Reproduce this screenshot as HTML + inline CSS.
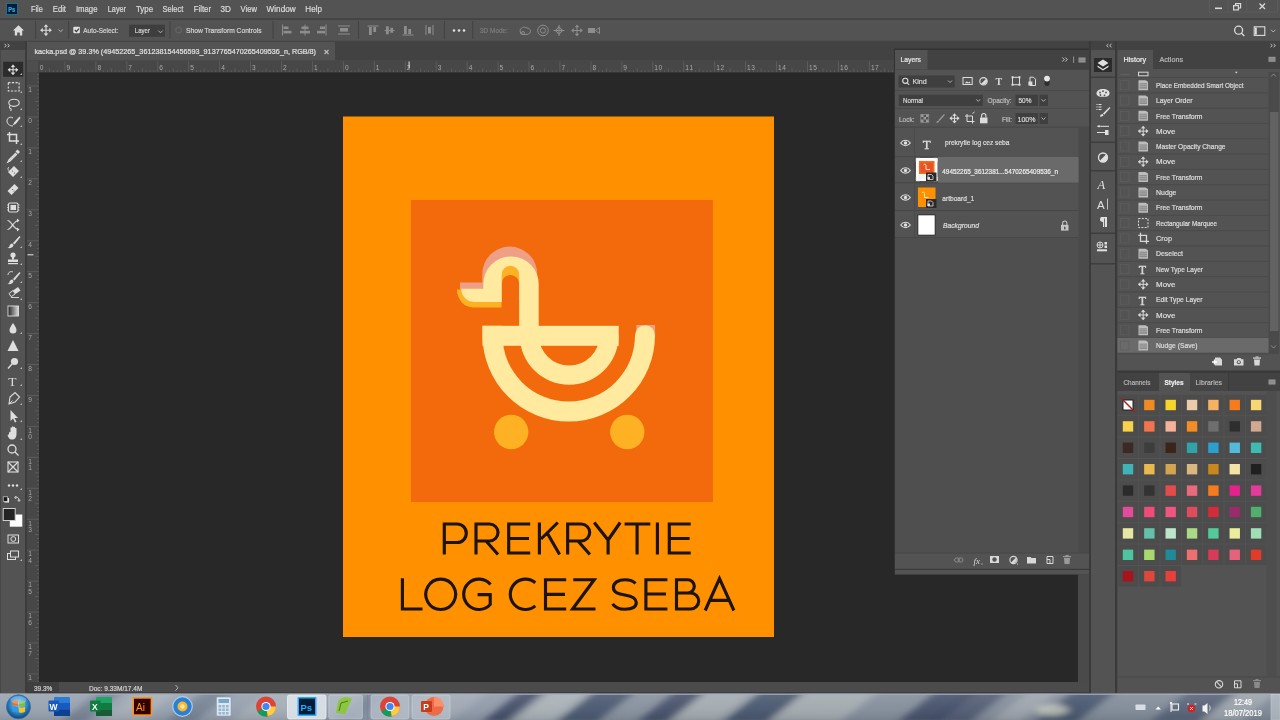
<!DOCTYPE html>
<html><head><meta charset="utf-8"><style>
html,body{margin:0;padding:0;width:1280px;height:720px;overflow:hidden;background:#535353}
svg{display:block;will-change:transform}
</style></head><body>
<svg width="1280" height="720" viewBox="0 0 1280 720" font-family="'Liberation Sans', sans-serif">
<rect x="0" y="0" width="1280" height="720" fill="#535353" />
<rect x="0" y="18.2" width="1280" height="1.8" fill="#444444" />
<rect x="6" y="3" width="12" height="12" fill="#1f6f8c" />
<rect x="7" y="4" width="10" height="10" fill="#001e36" />
<text x="8.2" y="11.8" font-size="7" fill="#3aa6e0" stroke="#3aa6e0" stroke-width="0.22" font-weight="bold" textLength="7" lengthAdjust="spacingAndGlyphs" >Ps</text>
<text x="30.9" y="11.6" font-size="9" fill="#dadada" stroke="#dadada" stroke-width="0.22" textLength="11.9" lengthAdjust="spacingAndGlyphs" >File</text>
<text x="52.8" y="11.6" font-size="9" fill="#dadada" stroke="#dadada" stroke-width="0.22" textLength="13.2" lengthAdjust="spacingAndGlyphs" >Edit</text>
<text x="75.9" y="11.6" font-size="9" fill="#dadada" stroke="#dadada" stroke-width="0.22" textLength="21.6" lengthAdjust="spacingAndGlyphs" >Image</text>
<text x="107.8" y="11.6" font-size="9" fill="#dadada" stroke="#dadada" stroke-width="0.22" textLength="18.2" lengthAdjust="spacingAndGlyphs" >Layer</text>
<text x="136" y="11.6" font-size="9" fill="#dadada" stroke="#dadada" stroke-width="0.22" textLength="17" lengthAdjust="spacingAndGlyphs" >Type</text>
<text x="162.5" y="11.6" font-size="9" fill="#dadada" stroke="#dadada" stroke-width="0.22" textLength="20.9" lengthAdjust="spacingAndGlyphs" >Select</text>
<text x="193.75" y="11.6" font-size="9" fill="#dadada" stroke="#dadada" stroke-width="0.22" textLength="17.25" lengthAdjust="spacingAndGlyphs" >Filter</text>
<text x="220.6" y="11.6" font-size="9" fill="#dadada" stroke="#dadada" stroke-width="0.22" textLength="10.4" lengthAdjust="spacingAndGlyphs" >3D</text>
<text x="240.6" y="11.6" font-size="9" fill="#dadada" stroke="#dadada" stroke-width="0.22" textLength="16.3" lengthAdjust="spacingAndGlyphs" >View</text>
<text x="266.6" y="11.6" font-size="9" fill="#dadada" stroke="#dadada" stroke-width="0.22" textLength="29.0" lengthAdjust="spacingAndGlyphs" >Window</text>
<text x="305.3" y="11.6" font-size="9" fill="#dadada" stroke="#dadada" stroke-width="0.22" textLength="16.7" lengthAdjust="spacingAndGlyphs" >Help</text>
<rect x="1209.5" y="-1" width="68" height="13" fill="none" stroke="#5c5c5c" stroke-width="1"/>
<line x1="1228" y1="0" x2="1228" y2="12" stroke="#5a5a5a"/>
<line x1="1246.5" y1="0" x2="1246.5" y2="12" stroke="#5a5a5a"/>
<rect x="1215" y="7.5" width="7" height="1.6" fill="#d8d8d8" />
<g fill="none" stroke="#d8d8d8" stroke-width="1.2"><rect x="1233.6" y="5.6" width="4.8" height="4.3"/><path d="M1235.6 5.6 V3.6 H1240.6 V8 H1238.4"/></g>
<path d="M1259.5 3.5 L1265 9 M1265 3.5 L1259.5 9" stroke="#d8d8d8" stroke-width="1.3"/>
<rect x="0" y="40.8" width="1280" height="1.2" fill="#444444" />
<rect x="35.1" y="21" width="1" height="18" fill="#424242" />
<rect x="68.1" y="21" width="1" height="18" fill="#424242" />
<rect x="169.5" y="21" width="1" height="18" fill="#424242" />
<rect x="272.5" y="21" width="1" height="18" fill="#424242" />
<rect x="358.0" y="21" width="1" height="18" fill="#424242" />
<rect x="443.9" y="21" width="1" height="18" fill="#424242" />
<rect x="472.2" y="21" width="1" height="18" fill="#424242" />
<path d="M13 30.5 L18.5 25.3 L24 30.5 L22.2 30.5 L22.2 35.6 L19.8 35.6 L19.8 32.4 L17.2 32.4 L17.2 35.6 L14.8 35.6 L14.8 30.5 Z" fill="#dcdcdc"/>
<g fill="#dcdcdc" stroke="#dcdcdc" stroke-width="1.1"><path d="M41.0 30.2 H51.0 M46 25.2 V35.2" fill="none"/><path d="M40.4 30.2 l2.2 -1.9 v3.8z M51.6 30.2 l-2.2 -1.9 v3.8z M46 24.599999999999998 l-1.9 2.2 h3.8z M46 35.800000000000004 l-1.9 -2.2 h3.8z" stroke-width="0.4"/></g>
<path d="M58.5 29.5 l2.2 2.2 l2.2 -2.2" fill="none" stroke="#bdbdbd" stroke-width="0.9"/>
<rect x="73.3" y="26.7" width="6.6" height="6.6" rx="1" fill="#e0e0e0"/>
<path d="M74.8 30 l1.6 1.6 l2.6 -3" fill="none" stroke="#3a3a3a" stroke-width="1.2"/>
<text x="83.3" y="32.9" font-size="8" fill="#d4d4d4" stroke="#d4d4d4" stroke-width="0.22" textLength="35.1" lengthAdjust="spacingAndGlyphs" >Auto-Select:</text>
<rect x="129" y="24.7" width="36" height="12.1" fill="#3e3e3e" />
<text x="134.8" y="33.3" font-size="8" fill="#d4d4d4" stroke="#d4d4d4" stroke-width="0.22" textLength="15.2" lengthAdjust="spacingAndGlyphs" >Layer</text>
<path d="M158.3 30.6 l2.2 2.2 l2.2 -2.2" fill="none" stroke="#bdbdbd" stroke-width="0.9"/>
<circle cx="178.6" cy="30.2" r="2.9" fill="none" stroke="#6a6a6a" stroke-width="1"/>
<text x="186" y="33" font-size="8" fill="#d4d4d4" stroke="#d4d4d4" stroke-width="0.22" textLength="75.5" lengthAdjust="spacingAndGlyphs" >Show Transform Controls</text>
<g fill="#8d8d8d"><rect x="282" y="24.5" width="1" height="11"/><rect x="283.5" y="26.5" width="5" height="2.6"/><rect x="283.5" y="30.8" width="8" height="2.6"/></g>
<g fill="#8d8d8d"><rect x="304.5" y="24.5" width="1" height="11"/><rect x="301.5" y="26.5" width="7" height="2.6"/><rect x="300" y="30.8" width="10" height="2.6"/></g>
<g fill="#8d8d8d"><rect x="325.5" y="24.5" width="1" height="11"/><rect x="320" y="26.5" width="5" height="2.6"/><rect x="317" y="30.8" width="8" height="2.6"/></g>
<g fill="#8d8d8d"><rect x="338" y="25.5" width="12" height="1"/><rect x="340" y="28" width="8" height="3.6"/><rect x="338" y="33.5" width="12" height="1"/></g>
<g fill="#8d8d8d"><rect x="367.5" y="25.5" width="11" height="1"/><rect x="369" y="27" width="2.8" height="8"/><rect x="373.3" y="27" width="2.8" height="5"/></g>
<g fill="#8d8d8d"><rect x="384.5" y="30" width="10" height="1"/><rect x="386" y="26.3" width="2.8" height="8"/><rect x="390.3" y="27.8" width="2.8" height="5"/></g>
<g fill="#8d8d8d"><rect x="402.5" y="34.5" width="11" height="1"/><rect x="404" y="26" width="2.8" height="8"/><rect x="408.3" y="29" width="2.8" height="5"/></g>
<g fill="#8d8d8d"><rect x="425.5" y="25" width="1" height="10"/><rect x="428" y="27" width="3" height="6.5"/><rect x="432.5" y="25" width="1" height="10"/></g>
<circle cx="454" cy="30.5" r="1.3" fill="#e0e0e0"/>
<circle cx="459" cy="30.5" r="1.3" fill="#e0e0e0"/>
<circle cx="464" cy="30.5" r="1.3" fill="#e0e0e0"/>
<text x="480" y="32.6" font-size="7.5" fill="#7c7c7c" stroke="#7c7c7c" stroke-width="0.22" textLength="28" lengthAdjust="spacingAndGlyphs" >3D Mode:</text>
<g fill="none" stroke="#8d8d8d" stroke-width="1"><path d="M520 31 c0 -3 4 -5 7 -3 c3 0 4 3 3 5 c-2 2 -6 2 -9 1 z"/><circle cx="523" cy="33" r="1.5"/></g>
<g fill="none" stroke="#8d8d8d" stroke-width="1"><circle cx="543" cy="30.5" r="5.3"/><circle cx="543" cy="30.5" r="2.6"/></g>
<g fill="none" stroke="#8d8d8d" stroke-width="1"><path d="M559 25 v11 M553.5 30.5 h11"/><rect x="556.5" y="28" width="5" height="5" transform="rotate(45 559 30.5)"/></g>
<g fill="#8d8d8d" stroke="#8d8d8d" stroke-width="1.1"><path d="M572.0 30.5 H582.0 M577 25.5 V35.5" fill="none"/><path d="M571.4 30.5 l2.2 -1.9 v3.8z M582.6 30.5 l-2.2 -1.9 v3.8z M577 24.9 l-1.9 2.2 h3.8z M577 36.1 l-1.9 -2.2 h3.8z" stroke-width="0.4"/></g>
<g fill="#8d8d8d"><rect x="588" y="28" width="7" height="5"/><path d="M595.5 30.5 l4 -3 v6z" fill="none" stroke="#8d8d8d"/></g>
<g fill="none" stroke="#dcdcdc" stroke-width="1.3"><circle cx="1238.6" cy="30.2" r="4"/><path d="M1241.5 33.2 l2.8 2.8"/></g>
<g fill="none" stroke="#dcdcdc" stroke-width="1.1"><rect x="1254.2" y="26.8" width="10.6" height="8.6"/></g>
<rect x="1255" y="27.6" width="1.8" height="7" fill="#dcdcdc" />
<path d="M1271 29.8 l2.2 2.2 l2.2 -2.2" fill="none" stroke="#bdbdbd" stroke-width="0.9"/>
<rect x="0" y="41" width="26" height="9" fill="#424242" />
<path d="M4.5 44 l1.8 1.6 l-1.8 1.6 M7.6 44 l1.8 1.6 l-1.8 1.6" fill="none" stroke="#d0d0d0" stroke-width="0.9"/>
<rect x="0" y="50" width="26" height="643" fill="#535353" />
<rect x="0" y="50" width="1" height="643" fill="#474747" />
<rect x="25" y="41" width="2" height="652" fill="#3c3c3c" />
<rect x="3.1" y="61.75" width="20" height="15" fill="#2c2c2c" />
<g fill="#dedede" stroke="#dedede" stroke-width="1.1"><path d="M8.5 69.8 H17.5 M13 65.3 V74.3" fill="none"/><path d="M7.9 69.8 l2.2 -1.9 v3.8z M18.1 69.8 l-2.2 -1.9 v3.8z M13 64.7 l-1.9 2.2 h3.8z M13 74.89999999999999 l-1.9 -2.2 h3.8z" stroke-width="0.4"/></g>
<path d="M20 75 l2 -2 v2z" fill="#bbbbbb"/>
<rect x="8.3" y="82.6" width="10.8" height="8.4" fill="none" stroke="#dedede" stroke-width="1.1" stroke-dasharray="2.2 1.4"/>
<path d="M20 93 l2 -2 v2z" fill="#bbbbbb"/>
<g fill="none" stroke="#dedede" stroke-width="1.1"><ellipse cx="14" cy="102.8" rx="5.2" ry="3.6"/><path d="M10.5 105.5 c-1.5 1 -1.5 2.5 0 3 c1 0.5 1 1.5 0 2.2"/></g>
<path d="M20 110 l2 -2 v2z" fill="#bbbbbb"/>
<g fill="none" stroke="#dedede" stroke-width="1"><path d="M13 118 c-3 -2 -6 0 -6 3 c0 3 3 5 6 5"/></g><path d="M19.5 116.5 L14.5 122 L12.5 125.5 L16 123.8 L20.5 118 Z" fill="#dedede"/>
<path d="M20 127 l2 -2 v2z" fill="#bbbbbb"/>
<g fill="none" stroke="#dedede" stroke-width="1.5"><path d="M9.5 132 V141 H19 M7 134.5 H16.5 V144"/></g>
<path d="M20 145 l2 -2 v2z" fill="#bbbbbb"/>
<g fill="#dedede"><path d="M17.5 149.5 l2.5 2.5 l-2 2 l-2.5 -2.5z"/></g><path d="M16 153 L9 160 L8 162 L10 161 L17 154" fill="none" stroke="#dedede" stroke-width="1.3"/>
<path d="M20 162 l2 -2 v2z" fill="#bbbbbb"/>
<g fill="#dedede"><path d="M8 172 l6 -6 l5 5 l-6 6 z" transform="rotate(0)"/></g><g fill="#535353"><circle cx="12.5" cy="171" r="0.6"/><circle cx="14.5" cy="173" r="0.6"/></g>
<path d="M20 178 l2 -2 v2z" fill="#bbbbbb"/>
<path d="M9 167 c-1.5 1 -1.5 3 0 3.5" fill="none" stroke="#dedede" stroke-width="0.9"/>
<g fill="#dedede"><path d="M7.5 191 l7 -7 l4 4 l-7 7 z"/></g><g fill="#535353"><circle cx="12.5" cy="189.5" r="0.6"/><circle cx="14" cy="191" r="0.6"/></g>
<g fill="none" stroke="#dedede" stroke-width="1.1"><rect x="8.5" y="203" width="9.5" height="9" rx="1.5"/></g><g fill="#dedede"><rect x="10.5" y="205" width="5.5" height="5"/></g><path d="M7 205 h1.5 M7 207.5 h1.5 M7 210 h1.5 M18 205 h1.5 M18 207.5 h1.5 M18 210 h1.5" stroke="#dedede" stroke-width="0.8"/>
<g fill="none" stroke="#dedede" stroke-width="1.2"><path d="M7.5 220.5 c4 0 6 9 11 9 M7.5 229.5 c4 0 6 -9 11 -9"/></g><path d="M19.5 220.5 l-2.5 -2 v4z M19.5 229.5 l-2.5 -2 v4z" fill="#dedede"/>
<path d="M19.5 236 L13 243 L14.5 244.5 L20.5 237 Z" fill="#dedede"/><path d="M12.5 243.5 c-2 0 -3 1.5 -3 2.5 c0 1 -1 1.5 -2 2 c3 0.5 6 -0.5 6 -3 z" fill="#dedede"/>
<path d="M20 248 l2 -2 v2z" fill="#bbbbbb"/>
<g fill="#dedede"><circle cx="13" cy="255" r="2.6"/><rect x="12" y="256" width="2" height="3.5"/><path d="M8 259.5 h10 v2.5 h-10z"/><rect x="8" y="263" width="10" height="1.2"/></g>
<path d="M20 265 l2 -2 v2z" fill="#bbbbbb"/>
<path d="M19.5 272 L13 279 L14.5 280.5 L20.5 273 Z" fill="#dedede"/><path d="M12.5 279.5 c-2 0 -3 1.5 -3 2.5 c0 1 -1 1.5 -2 2 c3 0.5 6 -0.5 6 -3 z" fill="#dedede"/><path d="M8 275 c0 -3 3 -4 5 -3" fill="none" stroke="#dedede" stroke-width="1"/>
<path d="M20 283 l2 -2 v2z" fill="#bbbbbb"/>
<path d="M13 290.5 l5 -3.5 l2.5 3.5 l-5 3.5z" fill="#dedede"/><path d="M13 290.5 l-4 3 l2.2 3.2 l4 -2.8 z" fill="none" stroke="#dedede" stroke-width="1"/><path d="M11 297.5 h8" stroke="#dedede" stroke-width="0.9"/>
<path d="M20 300 l2 -2 v2z" fill="#bbbbbb"/>
<defs><linearGradient id="grd" x1="0" x2="1"><stop offset="0" stop-color="#222"/><stop offset="1" stop-color="#ddd"/></linearGradient></defs>
<rect x="8" y="306" width="10.5" height="10" fill="url(#grd)" stroke="#dedede" stroke-width="0.9"/>
<path d="M13 323 C11 326 9.5 328 9.5 330 a3.5 3.5 0 0 0 7 0 C16.5 328 15 326 13 323 Z" fill="#dedede"/>
<path d="M20 334 l2 -2 v2z" fill="#bbbbbb"/>
<path d="M13 340 L18.5 351 H7.5 Z" fill="#dedede"/>
<circle cx="14.5" cy="361.5" r="3.6" fill="#dedede"/><path d="M12 364 L8 368.5" stroke="#dedede" stroke-width="1.4"/>
<path d="M20 369 l2 -2 v2z" fill="#bbbbbb"/>
<text x="8.3" y="385.5" font-size="13.5" fill="#dedede" font-family="Liberation Serif">T</text>
<path d="M20 386 l2 -2 v2z" fill="#bbbbbb"/>
<path d="M9 404 L10 397 L15 392.5 L19.5 397 L15 402 Z" fill="none" stroke="#dedede" stroke-width="1.1"/><path d="M9 404 l3.5 -3.5" stroke="#dedede" stroke-width="0.9"/>
<path d="M20 405 l2 -2 v2z" fill="#bbbbbb"/>
<path d="M10.5 410 L10.5 421 L13 418.5 L15 422.5 L16.5 421.8 L14.5 418 L18 418 Z" fill="#dedede"/>
<path d="M20 422 l2 -2 v2z" fill="#bbbbbb"/>
<path d="M9 434 c0 -2 1 -3 1.5 -1.5 v-4.5 c0 -1 1.5 -1 1.5 0 v-1 c0 -1 1.5 -1 1.5 0 v0.5 c0 -1 1.5 -1 1.5 0 v1 c0 -1 1.5 -1 1.5 0 v6 c0 3 -2 5 -4 5 h-1 c-2 0 -3 -2 -4 -4 z" fill="#dedede"/>
<path d="M20 440 l2 -2 v2z" fill="#bbbbbb"/>
<g fill="none" stroke="#dedede" stroke-width="1.3"><circle cx="12" cy="449" r="4"/><path d="M15 452 l3.5 3.5"/></g>
<g fill="none" stroke="#dedede" stroke-width="1.1"><rect x="8" y="462" width="10" height="10"/><path d="M8 462 L18 472 M18 462 L8 472"/></g>
<circle cx="9" cy="485.5" r="1.2" fill="#dedede"/>
<circle cx="13" cy="485.5" r="1.2" fill="#dedede"/>
<circle cx="17" cy="485.5" r="1.2" fill="#dedede"/>
<path d="M20 490 l2 -2 v2z" fill="#bbbbbb"/>
<rect x="4.5" y="498" width="4.5" height="4.5" fill="#eee"/><rect x="3.2" y="496.8" width="4.5" height="4.5" fill="#1a1a1a" stroke="#ddd" stroke-width="0.6"/>
<path d="M15.5 497 c2.5 0 3.5 1 3.5 3.5 M14.5 497.5 l1.5 -1.2 v2.4z M19 501.5 l-1.2 -1.5 h2.4z" fill="none" stroke="#dedede" stroke-width="0.8"/>
<rect x="9.8" y="514.5" width="12.5" height="12.2" fill="#ffffff" />
<rect x="3.2" y="508.5" width="12" height="12" fill="#242424" stroke="#cfcfcf" stroke-width="1"/>
<g fill="none" stroke="#dedede" stroke-width="1"><rect x="8" y="535" width="10.5" height="8"/><circle cx="13.25" cy="539" r="2.4"/></g>
<g fill="none" stroke="#dedede" stroke-width="1"><rect x="7.5" y="553.5" width="8" height="6"/><rect x="10.5" y="551" width="8" height="6" fill="#535353"/></g>
<path d="M20 561 l2 -2 v2z" fill="#bbbbbb"/>
<rect x="27" y="42" width="1062" height="18.5" fill="#424242" />
<rect x="27" y="42" width="308" height="18.5" fill="#535353" />
<text x="34.5" y="54.3" font-size="8" fill="#e0e0e0" stroke="#e0e0e0" stroke-width="0.22" textLength="281.5" lengthAdjust="spacingAndGlyphs" >kacka.psd @ 39.3% (49452265_361238154456593_9137765470265409536_n, RGB/8)</text>
<path d="M324.5 50 l4 4 M328.5 50 l-4 4" stroke="#bdbdbd" stroke-width="1.1"/>
<rect x="27" y="60.5" width="1062" height="12" fill="#474747" />
<rect x="27" y="60.5" width="12" height="621.5" fill="#474747" />
<rect x="27" y="72" width="1062" height="0.6" fill="#3a3a3a" />
<text x="39.699999999999946" y="69.6" font-size="6.6" fill="#a8a8a8" stroke="#a8a8a8" stroke-width="0" >0</text>
<text x="66.43999999999994" y="69.6" font-size="6.6" fill="#a8a8a8" stroke="#a8a8a8" stroke-width="0" >9</text>
<text x="97.37999999999997" y="69.6" font-size="6.6" fill="#a8a8a8" stroke="#a8a8a8" stroke-width="0" >8</text>
<text x="128.31999999999996" y="69.6" font-size="6.6" fill="#a8a8a8" stroke="#a8a8a8" stroke-width="0" >7</text>
<text x="159.25999999999996" y="69.6" font-size="6.6" fill="#a8a8a8" stroke="#a8a8a8" stroke-width="0" >6</text>
<text x="190.19999999999996" y="69.6" font-size="6.6" fill="#a8a8a8" stroke="#a8a8a8" stroke-width="0" >5</text>
<text x="221.14" y="69.6" font-size="6.6" fill="#a8a8a8" stroke="#a8a8a8" stroke-width="0" >4</text>
<text x="252.07999999999998" y="69.6" font-size="6.6" fill="#a8a8a8" stroke="#a8a8a8" stroke-width="0" >3</text>
<text x="283.02" y="69.6" font-size="6.6" fill="#a8a8a8" stroke="#a8a8a8" stroke-width="0" >2</text>
<text x="313.96" y="69.6" font-size="6.6" fill="#a8a8a8" stroke="#a8a8a8" stroke-width="0" >1</text>
<text x="344.9" y="69.6" font-size="6.6" fill="#a8a8a8" stroke="#a8a8a8" stroke-width="0" >0</text>
<text x="375.84" y="69.6" font-size="6.6" fill="#a8a8a8" stroke="#a8a8a8" stroke-width="0" >1</text>
<text x="406.78" y="69.6" font-size="6.6" fill="#a8a8a8" stroke="#a8a8a8" stroke-width="0" >2</text>
<text x="437.71999999999997" y="69.6" font-size="6.6" fill="#a8a8a8" stroke="#a8a8a8" stroke-width="0" >3</text>
<text x="468.65999999999997" y="69.6" font-size="6.6" fill="#a8a8a8" stroke="#a8a8a8" stroke-width="0" >4</text>
<text x="499.6" y="69.6" font-size="6.6" fill="#a8a8a8" stroke="#a8a8a8" stroke-width="0" >5</text>
<text x="530.54" y="69.6" font-size="6.6" fill="#a8a8a8" stroke="#a8a8a8" stroke-width="0" >6</text>
<text x="561.48" y="69.6" font-size="6.6" fill="#a8a8a8" stroke="#a8a8a8" stroke-width="0" >7</text>
<text x="592.42" y="69.6" font-size="6.6" fill="#a8a8a8" stroke="#a8a8a8" stroke-width="0" >8</text>
<text x="623.36" y="69.6" font-size="6.6" fill="#a8a8a8" stroke="#a8a8a8" stroke-width="0" >9</text>
<text x="654.3" y="69.6" font-size="6.6" fill="#a8a8a8" stroke="#a8a8a8" stroke-width="0" >1</text>
<text x="658.5" y="69.6" font-size="6.6" fill="#a8a8a8" stroke="#a8a8a8" stroke-width="0" >0</text>
<text x="685.24" y="69.6" font-size="6.6" fill="#a8a8a8" stroke="#a8a8a8" stroke-width="0" >1</text>
<text x="689.44" y="69.6" font-size="6.6" fill="#a8a8a8" stroke="#a8a8a8" stroke-width="0" >1</text>
<text x="716.1800000000001" y="69.6" font-size="6.6" fill="#a8a8a8" stroke="#a8a8a8" stroke-width="0" >1</text>
<text x="720.3800000000001" y="69.6" font-size="6.6" fill="#a8a8a8" stroke="#a8a8a8" stroke-width="0" >2</text>
<text x="747.12" y="69.6" font-size="6.6" fill="#a8a8a8" stroke="#a8a8a8" stroke-width="0" >1</text>
<text x="751.32" y="69.6" font-size="6.6" fill="#a8a8a8" stroke="#a8a8a8" stroke-width="0" >3</text>
<text x="778.06" y="69.6" font-size="6.6" fill="#a8a8a8" stroke="#a8a8a8" stroke-width="0" >1</text>
<text x="782.26" y="69.6" font-size="6.6" fill="#a8a8a8" stroke="#a8a8a8" stroke-width="0" >4</text>
<text x="809.0" y="69.6" font-size="6.6" fill="#a8a8a8" stroke="#a8a8a8" stroke-width="0" >1</text>
<text x="813.2" y="69.6" font-size="6.6" fill="#a8a8a8" stroke="#a8a8a8" stroke-width="0" >5</text>
<text x="839.94" y="69.6" font-size="6.6" fill="#a8a8a8" stroke="#a8a8a8" stroke-width="0" >1</text>
<text x="844.1400000000001" y="69.6" font-size="6.6" fill="#a8a8a8" stroke="#a8a8a8" stroke-width="0" >6</text>
<text x="870.88" y="69.6" font-size="6.6" fill="#a8a8a8" stroke="#a8a8a8" stroke-width="0" >1</text>
<text x="875.08" y="69.6" font-size="6.6" fill="#a8a8a8" stroke="#a8a8a8" stroke-width="0" >7</text>
<text x="901.82" y="69.6" font-size="6.6" fill="#a8a8a8" stroke="#a8a8a8" stroke-width="0" >1</text>
<text x="906.0200000000001" y="69.6" font-size="6.6" fill="#a8a8a8" stroke="#a8a8a8" stroke-width="0" >8</text>
<text x="932.76" y="69.6" font-size="6.6" fill="#a8a8a8" stroke="#a8a8a8" stroke-width="0" >1</text>
<text x="936.96" y="69.6" font-size="6.6" fill="#a8a8a8" stroke="#a8a8a8" stroke-width="0" >9</text>
<text x="963.7" y="69.6" font-size="6.6" fill="#a8a8a8" stroke="#a8a8a8" stroke-width="0" >2</text>
<text x="967.9000000000001" y="69.6" font-size="6.6" fill="#a8a8a8" stroke="#a8a8a8" stroke-width="0" >0</text>
<text x="994.64" y="69.6" font-size="6.6" fill="#a8a8a8" stroke="#a8a8a8" stroke-width="0" >2</text>
<text x="998.84" y="69.6" font-size="6.6" fill="#a8a8a8" stroke="#a8a8a8" stroke-width="0" >1</text>
<text x="1025.58" y="69.6" font-size="6.6" fill="#a8a8a8" stroke="#a8a8a8" stroke-width="0" >2</text>
<text x="1029.78" y="69.6" font-size="6.6" fill="#a8a8a8" stroke="#a8a8a8" stroke-width="0" >2</text>
<text x="1056.52" y="69.6" font-size="6.6" fill="#a8a8a8" stroke="#a8a8a8" stroke-width="0" >2</text>
<text x="1060.72" y="69.6" font-size="6.6" fill="#a8a8a8" stroke="#a8a8a8" stroke-width="0" >3</text>
<path d="M41.73 70.3 V72.3 M45.60 70.3 V72.3 M49.47 68.3 V72.3 M53.34 70.3 V72.3 M57.20 70.3 V72.3 M61.07 70.3 V72.3 M64.94 61.3 V72.3 M68.81 70.3 V72.3 M72.67 70.3 V72.3 M76.54 70.3 V72.3 M80.41 68.3 V72.3 M84.28 70.3 V72.3 M88.14 70.3 V72.3 M92.01 70.3 V72.3 M95.88 61.3 V72.3 M99.75 70.3 V72.3 M103.61 70.3 V72.3 M107.48 70.3 V72.3 M111.35 68.3 V72.3 M115.22 70.3 V72.3 M119.08 70.3 V72.3 M122.95 70.3 V72.3 M126.82 61.3 V72.3 M130.69 70.3 V72.3 M134.55 70.3 V72.3 M138.42 70.3 V72.3 M142.29 68.3 V72.3 M146.16 70.3 V72.3 M150.02 70.3 V72.3 M153.89 70.3 V72.3 M157.76 61.3 V72.3 M161.63 70.3 V72.3 M165.49 70.3 V72.3 M169.36 70.3 V72.3 M173.23 68.3 V72.3 M177.10 70.3 V72.3 M180.96 70.3 V72.3 M184.83 70.3 V72.3 M188.70 61.3 V72.3 M192.57 70.3 V72.3 M196.43 70.3 V72.3 M200.30 70.3 V72.3 M204.17 68.3 V72.3 M208.04 70.3 V72.3 M211.90 70.3 V72.3 M215.77 70.3 V72.3 M219.64 61.3 V72.3 M223.51 70.3 V72.3 M227.38 70.3 V72.3 M231.24 70.3 V72.3 M235.11 68.3 V72.3 M238.98 70.3 V72.3 M242.84 70.3 V72.3 M246.71 70.3 V72.3 M250.58 61.3 V72.3 M254.45 70.3 V72.3 M258.31 70.3 V72.3 M262.18 70.3 V72.3 M266.05 68.3 V72.3 M269.92 70.3 V72.3 M273.78 70.3 V72.3 M277.65 70.3 V72.3 M281.52 61.3 V72.3 M285.39 70.3 V72.3 M289.25 70.3 V72.3 M293.12 70.3 V72.3 M296.99 68.3 V72.3 M300.86 70.3 V72.3 M304.72 70.3 V72.3 M308.59 70.3 V72.3 M312.46 61.3 V72.3 M316.33 70.3 V72.3 M320.19 70.3 V72.3 M324.06 70.3 V72.3 M327.93 68.3 V72.3 M331.80 70.3 V72.3 M335.66 70.3 V72.3 M339.53 70.3 V72.3 M343.40 61.3 V72.3 M347.27 70.3 V72.3 M351.13 70.3 V72.3 M355.00 70.3 V72.3 M358.87 68.3 V72.3 M362.74 70.3 V72.3 M366.60 70.3 V72.3 M370.47 70.3 V72.3 M374.34 61.3 V72.3 M378.21 70.3 V72.3 M382.07 70.3 V72.3 M385.94 70.3 V72.3 M389.81 68.3 V72.3 M393.68 70.3 V72.3 M397.54 70.3 V72.3 M401.41 70.3 V72.3 M405.28 61.3 V72.3 M409.15 70.3 V72.3 M413.01 70.3 V72.3 M416.88 70.3 V72.3 M420.75 68.3 V72.3 M424.62 70.3 V72.3 M428.48 70.3 V72.3 M432.35 70.3 V72.3 M436.22 61.3 V72.3 M440.09 70.3 V72.3 M443.95 70.3 V72.3 M447.82 70.3 V72.3 M451.69 68.3 V72.3 M455.56 70.3 V72.3 M459.42 70.3 V72.3 M463.29 70.3 V72.3 M467.16 61.3 V72.3 M471.03 70.3 V72.3 M474.89 70.3 V72.3 M478.76 70.3 V72.3 M482.63 68.3 V72.3 M486.50 70.3 V72.3 M490.36 70.3 V72.3 M494.23 70.3 V72.3 M498.10 61.3 V72.3 M501.97 70.3 V72.3 M505.84 70.3 V72.3 M509.70 70.3 V72.3 M513.57 68.3 V72.3 M517.44 70.3 V72.3 M521.31 70.3 V72.3 M525.17 70.3 V72.3 M529.04 61.3 V72.3 M532.91 70.3 V72.3 M536.77 70.3 V72.3 M540.64 70.3 V72.3 M544.51 68.3 V72.3 M548.38 70.3 V72.3 M552.25 70.3 V72.3 M556.11 70.3 V72.3 M559.98 61.3 V72.3 M563.85 70.3 V72.3 M567.72 70.3 V72.3 M571.58 70.3 V72.3 M575.45 68.3 V72.3 M579.32 70.3 V72.3 M583.19 70.3 V72.3 M587.05 70.3 V72.3 M590.92 61.3 V72.3 M594.79 70.3 V72.3 M598.65 70.3 V72.3 M602.52 70.3 V72.3 M606.39 68.3 V72.3 M610.26 70.3 V72.3 M614.12 70.3 V72.3 M617.99 70.3 V72.3 M621.86 61.3 V72.3 M625.73 70.3 V72.3 M629.60 70.3 V72.3 M633.46 70.3 V72.3 M637.33 68.3 V72.3 M641.20 70.3 V72.3 M645.07 70.3 V72.3 M648.93 70.3 V72.3 M652.80 61.3 V72.3 M656.67 70.3 V72.3 M660.53 70.3 V72.3 M664.40 70.3 V72.3 M668.27 68.3 V72.3 M672.14 70.3 V72.3 M676.00 70.3 V72.3 M679.87 70.3 V72.3 M683.74 61.3 V72.3 M687.61 70.3 V72.3 M691.48 70.3 V72.3 M695.34 70.3 V72.3 M699.21 68.3 V72.3 M703.08 70.3 V72.3 M706.95 70.3 V72.3 M710.81 70.3 V72.3 M714.68 61.3 V72.3 M718.55 70.3 V72.3 M722.42 70.3 V72.3 M726.28 70.3 V72.3 M730.15 68.3 V72.3 M734.02 70.3 V72.3 M737.89 70.3 V72.3 M741.75 70.3 V72.3 M745.62 61.3 V72.3 M749.49 70.3 V72.3 M753.36 70.3 V72.3 M757.22 70.3 V72.3 M761.09 68.3 V72.3 M764.96 70.3 V72.3 M768.83 70.3 V72.3 M772.69 70.3 V72.3 M776.56 61.3 V72.3 M780.43 70.3 V72.3 M784.29 70.3 V72.3 M788.16 70.3 V72.3 M792.03 68.3 V72.3 M795.90 70.3 V72.3 M799.76 70.3 V72.3 M803.63 70.3 V72.3 M807.50 61.3 V72.3 M811.37 70.3 V72.3 M815.24 70.3 V72.3 M819.10 70.3 V72.3 M822.97 68.3 V72.3 M826.84 70.3 V72.3 M830.71 70.3 V72.3 M834.57 70.3 V72.3 M838.44 61.3 V72.3 M842.31 70.3 V72.3 M846.18 70.3 V72.3 M850.04 70.3 V72.3 M853.91 68.3 V72.3 M857.78 70.3 V72.3 M861.65 70.3 V72.3 M865.51 70.3 V72.3 M869.38 61.3 V72.3 M873.25 70.3 V72.3 M877.12 70.3 V72.3 M880.98 70.3 V72.3 M884.85 68.3 V72.3 M888.72 70.3 V72.3 M892.59 70.3 V72.3 M896.45 70.3 V72.3 M900.32 61.3 V72.3 M904.19 70.3 V72.3 M908.06 70.3 V72.3 M911.92 70.3 V72.3 M915.79 68.3 V72.3 M919.66 70.3 V72.3 M923.53 70.3 V72.3 M927.39 70.3 V72.3 M931.26 61.3 V72.3 M935.13 70.3 V72.3 M939.00 70.3 V72.3 M942.86 70.3 V72.3 M946.73 68.3 V72.3 M950.60 70.3 V72.3 M954.47 70.3 V72.3 M958.33 70.3 V72.3 M962.20 61.3 V72.3 M966.07 70.3 V72.3 M969.94 70.3 V72.3 M973.80 70.3 V72.3 M977.67 68.3 V72.3 M981.54 70.3 V72.3 M985.41 70.3 V72.3 M989.27 70.3 V72.3 M993.14 61.3 V72.3 M997.01 70.3 V72.3 M1000.88 70.3 V72.3 M1004.74 70.3 V72.3 M1008.61 68.3 V72.3 M1012.48 70.3 V72.3 M1016.35 70.3 V72.3 M1020.21 70.3 V72.3 M1024.08 61.3 V72.3 M1027.95 70.3 V72.3 M1031.81 70.3 V72.3 M1035.68 70.3 V72.3 M1039.55 68.3 V72.3 M1043.42 70.3 V72.3 M1047.28 70.3 V72.3 M1051.15 70.3 V72.3 M1055.02 61.3 V72.3 M1058.89 70.3 V72.3 M1062.75 70.3 V72.3 M1066.62 70.3 V72.3 M1070.49 68.3 V72.3 M1074.36 70.3 V72.3" stroke="#626262" stroke-width="0.8"/>
<rect x="408.6" y="61.5" width="1" height="7" fill="#e8e8e8" />
<rect x="27.5" y="254.3" width="6" height="1" fill="#e8e8e8" />
<text x="28.2" y="92.36" font-size="6.6" fill="#a8a8a8" stroke="#a8a8a8" stroke-width="0" >1</text>
<text x="28.2" y="123.3" font-size="6.6" fill="#a8a8a8" stroke="#a8a8a8" stroke-width="0" >0</text>
<text x="28.2" y="154.24" font-size="6.6" fill="#a8a8a8" stroke="#a8a8a8" stroke-width="0" >1</text>
<text x="28.2" y="185.18" font-size="6.6" fill="#a8a8a8" stroke="#a8a8a8" stroke-width="0" >2</text>
<text x="28.2" y="216.12" font-size="6.6" fill="#a8a8a8" stroke="#a8a8a8" stroke-width="0" >3</text>
<text x="28.2" y="247.06" font-size="6.6" fill="#a8a8a8" stroke="#a8a8a8" stroke-width="0" >4</text>
<text x="28.2" y="278.00000000000006" font-size="6.6" fill="#a8a8a8" stroke="#a8a8a8" stroke-width="0" >5</text>
<text x="28.2" y="308.94" font-size="6.6" fill="#a8a8a8" stroke="#a8a8a8" stroke-width="0" >6</text>
<text x="28.2" y="339.88000000000005" font-size="6.6" fill="#a8a8a8" stroke="#a8a8a8" stroke-width="0" >7</text>
<text x="28.2" y="370.82" font-size="6.6" fill="#a8a8a8" stroke="#a8a8a8" stroke-width="0" >8</text>
<text x="28.2" y="401.76000000000005" font-size="6.6" fill="#a8a8a8" stroke="#a8a8a8" stroke-width="0" >9</text>
<text x="28.2" y="432.70000000000005" font-size="6.6" fill="#a8a8a8" stroke="#a8a8a8" stroke-width="0" >1</text>
<text x="28.2" y="439.00000000000006" font-size="6.6" fill="#a8a8a8" stroke="#a8a8a8" stroke-width="0" >0</text>
<text x="28.2" y="463.64000000000004" font-size="6.6" fill="#a8a8a8" stroke="#a8a8a8" stroke-width="0" >1</text>
<text x="28.2" y="469.94000000000005" font-size="6.6" fill="#a8a8a8" stroke="#a8a8a8" stroke-width="0" >1</text>
<text x="28.2" y="494.58000000000004" font-size="6.6" fill="#a8a8a8" stroke="#a8a8a8" stroke-width="0" >1</text>
<text x="28.2" y="500.88000000000005" font-size="6.6" fill="#a8a8a8" stroke="#a8a8a8" stroke-width="0" >2</text>
<text x="28.2" y="525.52" font-size="6.6" fill="#a8a8a8" stroke="#a8a8a8" stroke-width="0" >1</text>
<text x="28.2" y="531.8199999999999" font-size="6.6" fill="#a8a8a8" stroke="#a8a8a8" stroke-width="0" >3</text>
<text x="28.2" y="556.46" font-size="6.6" fill="#a8a8a8" stroke="#a8a8a8" stroke-width="0" >1</text>
<text x="28.2" y="562.76" font-size="6.6" fill="#a8a8a8" stroke="#a8a8a8" stroke-width="0" >4</text>
<text x="28.2" y="587.4" font-size="6.6" fill="#a8a8a8" stroke="#a8a8a8" stroke-width="0" >1</text>
<text x="28.2" y="593.6999999999999" font-size="6.6" fill="#a8a8a8" stroke="#a8a8a8" stroke-width="0" >5</text>
<text x="28.2" y="618.3399999999999" font-size="6.6" fill="#a8a8a8" stroke="#a8a8a8" stroke-width="0" >1</text>
<text x="28.2" y="624.6399999999999" font-size="6.6" fill="#a8a8a8" stroke="#a8a8a8" stroke-width="0" >6</text>
<text x="28.2" y="649.28" font-size="6.6" fill="#a8a8a8" stroke="#a8a8a8" stroke-width="0" >1</text>
<text x="28.2" y="655.5799999999999" font-size="6.6" fill="#a8a8a8" stroke="#a8a8a8" stroke-width="0" >7</text>
<text x="28.2" y="680.22" font-size="6.6" fill="#a8a8a8" stroke="#a8a8a8" stroke-width="0" >1</text>
<text x="28.2" y="686.52" font-size="6.6" fill="#a8a8a8" stroke="#a8a8a8" stroke-width="0" >8</text>
<path d="M37 74.46 H39 M37 78.33 H39 M37 82.19 H39 M27 86.06 H39 M37 89.93 H39 M37 93.80 H39 M37 97.66 H39 M35 101.53 H39 M37 105.40 H39 M37 109.27 H39 M37 113.13 H39 M27 117.00 H39 M37 120.87 H39 M37 124.73 H39 M37 128.60 H39 M35 132.47 H39 M37 136.34 H39 M37 140.21 H39 M37 144.07 H39 M27 147.94 H39 M37 151.81 H39 M37 155.68 H39 M37 159.54 H39 M35 163.41 H39 M37 167.28 H39 M37 171.15 H39 M37 175.01 H39 M27 178.88 H39 M37 182.75 H39 M37 186.62 H39 M37 190.48 H39 M35 194.35 H39 M37 198.22 H39 M37 202.09 H39 M37 205.95 H39 M27 209.82 H39 M37 213.69 H39 M37 217.56 H39 M37 221.42 H39 M35 225.29 H39 M37 229.16 H39 M37 233.03 H39 M37 236.89 H39 M27 240.76 H39 M37 244.63 H39 M37 248.50 H39 M37 252.36 H39 M35 256.23 H39 M37 260.10 H39 M37 263.96 H39 M37 267.83 H39 M27 271.70 H39 M37 275.57 H39 M37 279.44 H39 M37 283.30 H39 M35 287.17 H39 M37 291.04 H39 M37 294.91 H39 M37 298.77 H39 M27 302.64 H39 M37 306.51 H39 M37 310.38 H39 M37 314.24 H39 M35 318.11 H39 M37 321.98 H39 M37 325.84 H39 M37 329.71 H39 M27 333.58 H39 M37 337.45 H39 M37 341.32 H39 M37 345.18 H39 M35 349.05 H39 M37 352.92 H39 M37 356.79 H39 M37 360.65 H39 M27 364.52 H39 M37 368.39 H39 M37 372.25 H39 M37 376.12 H39 M35 379.99 H39 M37 383.86 H39 M37 387.72 H39 M37 391.59 H39 M27 395.46 H39 M37 399.33 H39 M37 403.20 H39 M37 407.06 H39 M35 410.93 H39 M37 414.80 H39 M37 418.67 H39 M37 422.53 H39 M27 426.40 H39 M37 430.27 H39 M37 434.14 H39 M37 438.00 H39 M35 441.87 H39 M37 445.74 H39 M37 449.61 H39 M37 453.47 H39 M27 457.34 H39 M37 461.21 H39 M37 465.08 H39 M37 468.94 H39 M35 472.81 H39 M37 476.68 H39 M37 480.55 H39 M37 484.41 H39 M27 488.28 H39 M37 492.15 H39 M37 496.02 H39 M37 499.88 H39 M35 503.75 H39 M37 507.62 H39 M37 511.49 H39 M37 515.35 H39 M27 519.22 H39 M37 523.09 H39 M37 526.96 H39 M37 530.82 H39 M35 534.69 H39 M37 538.56 H39 M37 542.43 H39 M37 546.29 H39 M27 550.16 H39 M37 554.03 H39 M37 557.90 H39 M37 561.76 H39 M35 565.63 H39 M37 569.50 H39 M37 573.37 H39 M37 577.23 H39 M27 581.10 H39 M37 584.97 H39 M37 588.84 H39 M37 592.70 H39 M35 596.57 H39 M37 600.44 H39 M37 604.31 H39 M37 608.17 H39 M27 612.04 H39 M37 615.91 H39 M37 619.77 H39 M37 623.64 H39 M35 627.51 H39 M37 631.38 H39 M37 635.25 H39 M37 639.11 H39 M27 642.98 H39 M37 646.85 H39 M37 650.72 H39 M37 654.58 H39 M35 658.45 H39 M37 662.32 H39 M37 666.19 H39 M37 670.05 H39 M27 673.92 H39 M37 677.79 H39 M37 681.66 H39" stroke="#626262" stroke-width="0.8"/>
<rect x="27" y="60.5" width="11" height="12" fill="#4e4e4e" />
<rect x="39" y="72.5" width="1039" height="609.5" fill="#282828" />
<rect x="1078" y="72.5" width="11" height="609.5" fill="#4a4a4a" />
<rect x="27" y="682" width="1062" height="11" fill="#4b4b4b" />
<rect x="27" y="682" width="32" height="11" fill="#3f3f3f" />
<rect x="27" y="692.3" width="1064" height="1.5" fill="#383838" />
<text x="34" y="690.6" font-size="7" fill="#d0d0d0" stroke="#d0d0d0" stroke-width="0.22" textLength="18.3" lengthAdjust="spacingAndGlyphs" >39.3%</text>
<text x="89" y="690.6" font-size="7" fill="#d0d0d0" stroke="#d0d0d0" stroke-width="0.22" textLength="53.4" lengthAdjust="spacingAndGlyphs" >Doc: 9.33M/17.4M</text>
<path d="M175.5 685 l2.5 2.8 l-2.5 2.8" fill="none" stroke="#bdbdbd" stroke-width="0.9"/>
<rect x="343" y="116.5" width="431" height="520.5" fill="#FF9100" />
<rect x="411" y="200" width="302" height="302" fill="#F26A0B" />
<path d="M460 282.5 H482.3 V274 A27.45 27.45 0 0 1 537.2 274 V300 H482.3 V289.5 H460 Z" fill="#EF9F86"/>
<rect x="636.3" y="325" width="18.8" height="12" fill="#EF9F86"/>
<path d="M456.9 289.4 H501.7 V307.5 H473 A16.1 18.1 0 0 1 456.9 289.4 Z" fill="#FDB123"/>
<path d="M501.7 290 V274.5 A8.25 8.25 0 0 1 519.2 274.5 V290 Z" fill="#FDB123"/>
<path d="M501.7 326 V283.75 A8.45 8.45 0 0 1 519.2 283.75 V326 Z" fill="#F26A0B"/>
<path d="M461.25 288.75 H483.3 V284.2 A27.7 27.7 0 0 1 538.7 284.2 V330 H519.2 V274.5 A8.45 8.45 0 0 0 501.7 274.5 V301.9 H474 A12.75 13.15 0 0 1 461.25 288.75 Z" fill="#FFEAA0"/>
<rect x="482.5" y="325.8" width="136.2" height="20" fill="#FFEAA0"/>
<path d="M482.5 335.3 A86.25 86.25 0 0 0 655.0 335.3 H635.0 A66.25 66.25 0 0 1 502.5 335.3 Z" fill="#FFEAA0"/>
<rect x="482.5" y="325.8" width="20" height="10" fill="#FFEAA0"/>
<circle cx="645.0" cy="335.3" r="10" fill="#FFEAA0"/>
<path d="M519.7 335.3 A49.5 49.5 0 0 0 618.7 335.3 H599.5 A30.3 30.3 0 0 1 538.9000000000001 335.3 Z" fill="#FFEAA0"/>
<circle cx="511.2" cy="432" r="17.2" fill="#FDB123"/>
<circle cx="627.3" cy="432" r="17.2" fill="#FDB123"/>
<path d="M444.3 554.5 V524 H457.05 A9.25 9.25 0 0 1 457.05 542.5 H444.3 M476 554.5 V524 H489.5 A8.5 8.5 0 0 1 489.5 541 H476 M486 541 L498 554.5 M530.2 524 H508.7 V553 H530.2 M508.7 538.5 H529 M539.4 522.5 V554.5 M557.8 522.5 L541 539 M547.2 533 L559.6 554.5 M567.65 554.5 V524 H581.2 A8.5 8.5 0 0 1 581.2 541 H567.65 M578 541 L589.9 554.5 M594.2 522.5 L608.1 540 L620.2 522.5 M608.1 540 V554.5 M624.6 524 H650.3 M637.1 524 V554.5 M657.4 522.5 V554.5 M690.7 524 H669.3 V553 H690.7 M669.3 538.5 H689.6" fill="none" stroke="#1c130a" stroke-width="3.15" stroke-linejoin="miter"/>
<path d="M402.4 578.2 V609 H422.5 M440.7 579.1 A14.9 15.2 0 1 0 440.71 579.1 Z M490.5 584.5 A15.2 15.2 0 1 0 490.2 604.5 V594.6 H477.6 M535.3 582.7 A15.2 15.2 0 1 0 535.3 605.9 M566.2 579.7 H545.5 V609 H566.2 M545.5 594.4 H565 M573.3 579.7 H594.2 L572.6 609 H595.5 M635.5 583.5 C633 580.5 629 579.7 624.8 579.7 C618 579.7 613.4 583 613.4 587.5 C613.4 592.8 619 594 624.8 595 C631 596 636.3 597.5 636.3 602.6 C636.3 606.8 631.8 609.2 624.8 609.2 C619.5 609.2 615 607.3 612.6 603.8 M667.4 579.7 H645.9 V609 H667.4 M645.9 594 H666 M676.5 593 H687.65 A6.65 6.65 0 0 0 687.65 579.7 H676.5 V609 H690.7 A8 8 0 0 0 690.7 593 H687.65 M705.2 610.5 L719.5 578.6 L733.9 610.5 M709.5 600.3 H729.6" fill="none" stroke="#1c130a" stroke-width="3.15" stroke-linejoin="miter"/>
<rect x="894" y="48.5" width="196" height="526" fill="#323232" />
<rect x="895" y="50" width="194" height="19.5" fill="#424242" />
<rect x="895" y="50" width="32.5" height="19.5" fill="#535353" />
<text x="900.5" y="62.2" font-size="7.5" fill="#e6e6e6" stroke="#e6e6e6" stroke-width="0.22" textLength="20.5" lengthAdjust="spacingAndGlyphs" >Layers</text>
<path d="M1062.3 57.5 l2 2 l-2 2 M1065.3 57.5 l2 2 l-2 2" fill="none" stroke="#d8d8d8" stroke-width="0.9"/>
<rect x="1073.2" y="56.5" width="0.9" height="6.5" fill="#9a9a9a" />
<rect x="1078.5" y="57.5" width="7" height="5" fill="#9a9a9a" />
<path d="M1078.5 59 h7 M1078.5 60.8 h7" stroke="#6a6a6a" stroke-width="0.5"/>
<rect x="895" y="69.5" width="194" height="484" fill="#535353" />
<rect x="898.5" y="75.5" width="56.2" height="12" fill="#3f3f3f" />
<g fill="none" stroke="#dcdcdc" stroke-width="1.1"><circle cx="905.3" cy="80.8" r="2.6"/><path d="M907.2 82.8 l2 2"/></g>
<text x="912.5" y="84.3" font-size="8" fill="#d8d8d8" stroke="#d8d8d8" stroke-width="0.22" textLength="14.3" lengthAdjust="spacingAndGlyphs" >Kind</text>
<path d="M948 80.5 l2 2 l2 -2" fill="none" stroke="#bdbdbd" stroke-width="0.9"/>
<rect x="963" y="77.5" width="9.2" height="7" fill="none" stroke="#dcdcdc" stroke-width="1"/><path d="M964.8 83.2 l2 -2 l1.5 1.3 l1.2 -1 l1.2 1.7z" fill="#dcdcdc"/>
<circle cx="983.5" cy="81.3" r="3.7" fill="none" stroke="#dcdcdc" stroke-width="1.1"/><path d="M986.1 78.7 A3.7 3.7 0 0 1 980.9 83.9 Z" fill="#dcdcdc"/>
<text x="995.5" y="85.3" font-size="10" fill="#dcdcdc" font-family="Liberation Serif" font-weight="bold">T</text>
<g fill="none" stroke="#dcdcdc" stroke-width="1"><rect x="1012.5" y="77.3" width="7" height="7.4"/></g><g fill="#dcdcdc"><rect x="1011.5" y="76.3" width="2" height="2"/><rect x="1018.5" y="76.3" width="2" height="2"/><rect x="1011.5" y="83.7" width="2" height="2"/><rect x="1018.5" y="83.7" width="2" height="2"/></g>
<path d="M1030 77.2 h3.5 l2 2 v6.3 h-5.5z" fill="none" stroke="#dcdcdc" stroke-width="1"/><rect x="1028.4" y="81.5" width="4" height="4" fill="#dcdcdc"/>
<rect x="1044.5" y="78" width="5" height="8" rx="2.5" fill="#2e2e2e"/><circle cx="1047" cy="78.6" r="2.9" fill="#e8e8e8"/>
<rect x="895" y="90" width="194" height="1" fill="#4a4a4a" />
<rect x="898.8" y="94.7" width="84" height="11.3" fill="#3f3f3f" />
<text x="903" y="103.2" font-size="7.5" fill="#d8d8d8" stroke="#d8d8d8" stroke-width="0.22" textLength="20" lengthAdjust="spacingAndGlyphs" >Normal</text>
<path d="M976.2 99.3 l2 2 l2 -2" fill="none" stroke="#bdbdbd" stroke-width="0.9"/>
<text x="987.5" y="103.2" font-size="7.5" fill="#bcbcbc" stroke="#bcbcbc" stroke-width="0.22" textLength="24.0" lengthAdjust="spacingAndGlyphs" >Opacity:</text>
<rect x="1015.5" y="94.7" width="22.5" height="11.3" fill="#3f3f3f" />
<text x="1018.5" y="103.2" font-size="7.5" fill="#d8d8d8" stroke="#d8d8d8" stroke-width="0.22" textLength="13.0" lengthAdjust="spacingAndGlyphs" >50%</text>
<rect x="1039.5" y="94.7" width="8.5" height="11.3" fill="#3f3f3f" />
<path d="M1041.5 99.3 l2 2 l2 -2" fill="none" stroke="#bdbdbd" stroke-width="0.9"/>
<rect x="895" y="108" width="194" height="1" fill="#4a4a4a" />
<text x="899" y="121.8" font-size="7.5" fill="#bcbcbc" stroke="#bcbcbc" stroke-width="0.22" textLength="15.5" lengthAdjust="spacingAndGlyphs" >Lock:</text>
<g fill="#9a9a9a"><rect x="921" y="114.5" width="2.5" height="2.5"/><rect x="926" y="114.5" width="2.5" height="2.5"/><rect x="923.5" y="117" width="2.5" height="2.5"/><rect x="921" y="119.5" width="2.5" height="2.5"/><rect x="926" y="119.5" width="2.5" height="2.5"/></g><rect x="920.8" y="114.3" width="8" height="8" fill="none" stroke="#9a9a9a" stroke-width="0.6"/>
<path d="M944 114 L938.5 120 L939.6 121 L944.8 115z" fill="#9a9a9a"/><path d="M938.5 120.5 c-1 0 -2 1 -2.2 2.2 c1 0 2.5 0 2.8 -1.2z" fill="#9a9a9a"/>
<g fill="#dcdcdc" stroke="#dcdcdc" stroke-width="1"><path d="M950.25 118.3 H958.75 M954.5 114.05 V122.55" fill="none"/><path d="M949.65 118.3 l2.2 -1.9 v3.8z M959.35 118.3 l-2.2 -1.9 v3.8z M954.5 113.45 l-1.9 2.2 h3.8z M954.5 123.14999999999999 l-1.9 -2.2 h3.8z" stroke-width="0.4"/></g>
<g fill="none" stroke="#dcdcdc" stroke-width="1"><path d="M967 114 v7.5 h7.5 M965 116 h7.5 v7.5"/><path d="M972.5 113.5 l2 -1.5"/></g>
<rect x="980" y="117.5" width="7.5" height="5.8" fill="#dcdcdc"/><path d="M981.6 117.5 v-1.8 a2.15 2.15 0 0 1 4.3 0 v1.8" fill="none" stroke="#dcdcdc" stroke-width="1.1"/>
<text x="1002" y="121.8" font-size="7.5" fill="#bcbcbc" stroke="#bcbcbc" stroke-width="0.22" textLength="10" lengthAdjust="spacingAndGlyphs" >Fill:</text>
<rect x="1015.5" y="113" width="22.5" height="11" fill="#3f3f3f" />
<text x="1017.5" y="121.5" font-size="7.5" fill="#d8d8d8" stroke="#d8d8d8" stroke-width="0.22" textLength="18.0" lengthAdjust="spacingAndGlyphs" >100%</text>
<rect x="1039.5" y="113" width="8.5" height="11" fill="#3f3f3f" />
<path d="M1041.5 117.5 l2 2 l2 -2" fill="none" stroke="#bdbdbd" stroke-width="0.9"/>
<rect x="895" y="126.5" width="194" height="1.5" fill="#4a4a4a" />
<rect x="895" y="238" width="183.5" height="314.5" fill="#4f4f4f" />
<rect x="1078.5" y="128" width="10.5" height="425" fill="#4a4a4a" />
<rect x="895" y="156.2" width="183.5" height="1" fill="#474747" />
<rect x="895" y="182.3" width="183.5" height="1" fill="#474747" />
<rect x="895" y="210.0" width="183.5" height="1" fill="#474747" />
<rect x="895" y="237.0" width="183.5" height="1" fill="#474747" />
<rect x="938" y="156.7" width="140.5" height="26" fill="#6a6a6a" />
<rect x="914" y="128.3" width="0.9" height="109" fill="#4a4a4a" />
<path d="M900.7 143 C903.0 139.4 908.0 139.4 910.3 143 C908.0 146.6 903.0 146.6 900.7 143 Z" fill="none" stroke="#e0e0e0" stroke-width="1.1"/><circle cx="905.5" cy="143" r="1.7" fill="#e0e0e0"/>
<path d="M900.7 170.5 C903.0 166.9 908.0 166.9 910.3 170.5 C908.0 174.1 903.0 174.1 900.7 170.5 Z" fill="none" stroke="#e0e0e0" stroke-width="1.1"/><circle cx="905.5" cy="170.5" r="1.7" fill="#e0e0e0"/>
<path d="M900.7 197.5 C903.0 193.9 908.0 193.9 910.3 197.5 C908.0 201.1 903.0 201.1 900.7 197.5 Z" fill="none" stroke="#e0e0e0" stroke-width="1.1"/><circle cx="905.5" cy="197.5" r="1.7" fill="#e0e0e0"/>
<path d="M900.7 225 C903.0 221.4 908.0 221.4 910.3 225 C908.0 228.6 903.0 228.6 900.7 225 Z" fill="none" stroke="#e0e0e0" stroke-width="1.1"/><circle cx="905.5" cy="225" r="1.7" fill="#e0e0e0"/>
<text x="922.8" y="148.8" font-size="13" fill="#e0e0e0" stroke="#e0e0e0" stroke-width="0.3" font-family="Liberation Serif">T</text>
<text x="945" y="145.3" font-size="7.5" fill="#dedede" stroke="#dedede" stroke-width="0.22" textLength="64.5" lengthAdjust="spacingAndGlyphs" >prekrytie log cez seba</text>
<rect x="916" y="158" width="21.5" height="23" fill="#ffffff" />
<g fill="none" stroke="#e8e8e8" stroke-width="0.9"><path d="M916.3 162 v-3.7 h3.7 M933.5 158.3 h3.7 v3.7 M916.3 177 v3.7 h3.7 M933.5 180.7 h3.7 v-3.7"/></g>
<rect x="918" y="160" width="17.5" height="19" fill="#f4f4f4"/>
<rect x="919" y="161" width="15.5" height="13" fill="#f0701a" />
<rect x="920.5" y="162.5" width="12.5" height="10" fill="#e8512a" />
<path d="M923.5 165 c1 -1.5 2.5 -1 2.5 0.5 v4 h4" fill="none" stroke="#ffe9a0" stroke-width="1"/>
<rect x="926" y="172.5" width="10.5" height="8.5" fill="#2a2a2a" />
<path d="M928 174.5 h3.5 l1.5 1.5 v3.5 h-5z" fill="none" stroke="#e0e0e0" stroke-width="0.8"/><rect x="927.5" y="177" width="2.5" height="2.5" fill="#e0e0e0"/>
<text x="942.3" y="173.8" font-size="7.5" fill="#ececec" stroke="#ececec" stroke-width="0.22" textLength="115.7" lengthAdjust="spacingAndGlyphs" >49452265_3612381...5470265409536_n</text>
<rect x="918" y="187.5" width="17.5" height="19.5" fill="#ff9100" />
<path d="M922 193 c1 -1.5 2.5 -1 2.5 0.5 v4 h4" fill="none" stroke="#ffe9a0" stroke-width="1"/>
<rect x="926" y="199" width="10.5" height="9" fill="#2a2a2a" />
<path d="M928 201 h3.5 l1.5 1.5 v3.5 h-5z" fill="none" stroke="#e0e0e0" stroke-width="0.8"/><rect x="927.5" y="203.5" width="2.5" height="2.5" fill="#e0e0e0"/>
<text x="942.3" y="200.8" font-size="7.5" fill="#dedede" stroke="#dedede" stroke-width="0.22" textLength="32.0" lengthAdjust="spacingAndGlyphs" >artboard_1</text>
<rect x="917.5" y="214.5" width="18" height="21" fill="#2a2a2a" />
<rect x="918.3" y="215.3" width="16.4" height="19.4" fill="#ffffff" />
<text x="943" y="228" font-size="7.5" fill="#dedede" stroke="#dedede" stroke-width="0.22" font-style="italic" textLength="36" lengthAdjust="spacingAndGlyphs" >Background</text>
<rect x="1061" y="224.8" width="7.5" height="5.8" fill="#c4c4c4"/><path d="M1062.6 225 v-1.8 a2.15 2.15 0 0 1 4.3 0 v1.8" fill="none" stroke="#c4c4c4" stroke-width="1.1"/><rect x="1064" y="226.8" width="1.5" height="2.5" fill="#535353"/>
<rect x="895" y="553" width="194" height="16" fill="#535353" />
<rect x="895" y="552.5" width="194" height="1" fill="#474747" />
<g fill="none" stroke="#8a8a8a" stroke-width="1"><rect x="954.5" y="558" width="5" height="4" rx="2"/><rect x="958" y="558" width="5" height="4" rx="2"/></g>
<text x="973.5" y="564" font-size="9" fill="#d8d8d8" font-family="Liberation Serif" font-style="italic">fx</text><rect x="981.5" y="563.5" width="1" height="1" fill="#d8d8d8"/>
<rect x="990" y="556" width="9" height="7" fill="#d8d8d8"/><circle cx="994.5" cy="559.5" r="2.2" fill="#535353"/>
<circle cx="1013.5" cy="560" r="3.6" fill="none" stroke="#d8d8d8" stroke-width="1.1"/><path d="M1016 557.5 A3.6 3.6 0 0 1 1011 562.5Z" fill="#d8d8d8"/><rect x="1017" y="563.5" width="1" height="1" fill="#d8d8d8"/>
<path d="M1027 557 h3.5 l1 1 h4.5 v5.5 h-9z" fill="#d8d8d8"/>
<path d="M1047 556.5 h6 v7 h-6z" fill="none" stroke="#d8d8d8" stroke-width="1"/><path d="M1047 559.5 h3 v4" fill="none" stroke="#d8d8d8" stroke-width="1"/>
<g fill="#9a9a9a"><rect x="1063" y="556" width="8" height="1.2"/><rect x="1065.5" y="555" width="3" height="1"/><path d="M1064 558 h6 l-0.5 6 h-5z"/></g>
<rect x="895" y="569" width="194" height="5.5" fill="#535353" />
<rect x="895" y="568.8" width="194" height="1.2" fill="#3a3a3a" />
<rect x="1089" y="41" width="2" height="652" fill="#3a3a3a" />
<rect x="1091" y="41" width="24" height="9" fill="#424242" />
<path d="M1111.5 44 l-1.8 1.6 l1.8 1.6 M1108.4 44 l-1.8 1.6 l1.8 1.6" fill="none" stroke="#d0d0d0" stroke-width="0.9"/>
<rect x="1091" y="50" width="24" height="643" fill="#535353" />
<rect x="1115" y="41" width="2.5" height="652" fill="#3a3a3a" />
<rect x="1091" y="76.5" width="24" height="1.5" fill="#3e3e3e" />
<rect x="1091" y="141.5" width="24" height="1.5" fill="#3e3e3e" />
<rect x="1091" y="170" width="24" height="1.5" fill="#3e3e3e" />
<rect x="1091" y="232.5" width="24" height="1.5" fill="#3e3e3e" />
<rect x="1091" y="263" width="24" height="1.5" fill="#3e3e3e" />
<rect x="1094" y="58" width="18" height="14" fill="#2c2c2c" />
<path d="M1103 59.5 L1108.5 63 L1103 66.5 L1097.5 63 Z" fill="#e0e0e0"/><path d="M1097.5 65.5 L1103 69 L1108.5 65.5 L1108.5 67 L1103 70.5 L1097.5 67 Z" fill="#e0e0e0"/>
<path d="M1103 89 c-4 0 -6.5 2 -6.5 4.5 c0 2 2 3.2 4 3.2 h5 c2.5 0 4 -1.5 4 -3.5 c0 -2.3 -2.5 -4.2 -6.5 -4.2z" fill="#e0e0e0"/><g fill="#535353"><circle cx="1100" cy="92.5" r="0.9"/><circle cx="1103" cy="91.2" r="0.9"/><circle cx="1106" cy="92.5" r="0.9"/><circle cx="1100.5" cy="95" r="0.9"/><circle cx="1104.5" cy="95.3" r="0.9"/></g>
<g fill="#e0e0e0"><rect x="1096.5" y="104" width="1" height="1"/><rect x="1098.5" y="104" width="3" height="1"/><rect x="1096.5" y="106.5" width="1" height="1"/><rect x="1098.5" y="106.5" width="3" height="1"/><rect x="1096.5" y="109" width="1" height="1"/><rect x="1098.5" y="109" width="3" height="1"/></g><path d="M1109.5 107 L1103 113.5 L1104.2 114.7 L1110.3 108 Z" fill="#e0e0e0"/><path d="M1102.7 114 c-1.6 0 -2.5 1.2 -2.8 2.6 c1.5 0.2 3.2 -0.3 3.6 -1.6z" fill="#e0e0e0"/>
<g fill="#e0e0e0"><path d="M1097 126.3 c1 -1.3 3 -1.3 4 0 c-1 1.3 -3 1.3 -4 0z"/><rect x="1101" y="125.8" width="8" height="1"/><rect x="1097" y="132" width="8" height="1"/><path d="M1105 130 l3.5 0 l0 5 l-3.5 0 z"/></g>
<circle cx="1103" cy="157.5" r="4.5" fill="none" stroke="#e0e0e0" stroke-width="1.3"/><path d="M1106.2 154.3 A4.5 4.5 0 0 1 1099.8 160.7 Z" fill="#e0e0e0"/>
<text x="1097.5" y="188.5" font-size="12.5" fill="#e0e0e0" font-family="Liberation Serif" font-style="italic">A</text>
<text x="1097" y="208.5" font-size="11.5" fill="#e0e0e0">A</text><rect x="1107.2" y="198.5" width="0.8" height="11" fill="#e0e0e0"/>
<path d="M1101 217 h6 v10 h-2 v-8.5 h-0.8 v8.5 h-1.2 v-5 c-2 0 -3 -1 -3 -2.5 c0 -1.5 1 -2.5 1 -2.5z" fill="#e0e0e0"/>
<g fill="none" stroke="#e0e0e0" stroke-width="0.9"><circle cx="1100" cy="245" r="3"/><path d="M1097 245 h6 M1100 242 v6"/></g><g fill="#e0e0e0"><rect x="1104.5" y="242" width="2.5" height="2.5"/><rect x="1104.5" y="245.5" width="2.5" height="2.5"/><rect x="1097" y="249.3" width="10" height="2"/></g>
<rect x="1117.5" y="41" width="162.5" height="9" fill="#424242" />
<path d="M1270.5 44 l1.8 1.6 l-1.8 1.6 M1273.6 44 l1.8 1.6 l-1.8 1.6" fill="none" stroke="#d0d0d0" stroke-width="0.9"/>
<rect x="1117.5" y="50" width="162.5" height="19" fill="#424242" />
<rect x="1117.5" y="50" width="35.5" height="19" fill="#535353" />
<text x="1123.5" y="61.8" font-size="7.5" fill="#ececec" stroke="#ececec" stroke-width="0.22" textLength="22.5" lengthAdjust="spacingAndGlyphs" >History</text>
<text x="1159.5" y="61.8" font-size="7.5" fill="#b8b8b8" stroke="#b8b8b8" stroke-width="0.22" textLength="23.5" lengthAdjust="spacingAndGlyphs" >Actions</text>
<rect x="1268.5" y="56.8" width="7" height="5" fill="#9a9a9a" />
<path d="M1268.5 58.3 h7 M1268.5 60.1 h7" stroke="#6a6a6a" stroke-width="0.5"/>
<rect x="1117.5" y="69" width="162.5" height="301.5" fill="#535353" />
<rect x="1268.5" y="72" width="10.5" height="282" fill="#4a4a4a" />
<rect x="1270" y="112" width="8.5" height="219" fill="#626262" />
<path d="M1271 76.5 l2.5 -2.5 l2.5 2.5" fill="none" stroke="#9a9a9a" stroke-width="0.8"/>
<path d="M1271 345.5 l2.5 2.5 l2.5 -2.5" fill="none" stroke="#9a9a9a" stroke-width="0.8"/>
<rect x="1138.5" y="72.2" width="9.5" height="3.6" fill="none" stroke="#d8d8d8" stroke-width="1"/>
<path d="M1234.8 71.8 h3 l-1.5 1.8z" fill="#d0d0d0"/>
<path d="M1120.5 74.5 h9" stroke="#6a6a6a" stroke-width="0.6"/>
<rect x="1117.5" y="77.0" width="151" height="1" fill="#4a4a4a" />
<rect x="1117.5" y="92.32" width="151" height="1" fill="#4a4a4a" />
<rect x="1120.5" y="80.66" width="8.5" height="9" fill="none" stroke="#5e5e5e" stroke-width="0.7"/>
<path d="M1138.5 80.16 h7 l2.5 1.5 v8.5 h-9.5z" fill="#bdbdbd"/><rect x="1139.5" y="83.16" width="7.5" height="5.5" fill="#8a8a8a"/><path d="M1139.5 84.66 h7.5 M1139.5 86.66 h7.5" stroke="#c8c8c8" stroke-width="0.5"/>
<text x="1156" y="87.86" font-size="7.5" fill="#dcdcdc" stroke="#dcdcdc" stroke-width="0.22" textLength="87.5" lengthAdjust="spacingAndGlyphs" >Place Embedded Smart Object</text>
<rect x="1117.5" y="107.63999999999999" width="151" height="1" fill="#4a4a4a" />
<rect x="1120.5" y="95.98" width="8.5" height="9" fill="none" stroke="#5e5e5e" stroke-width="0.7"/>
<path d="M1138.5 95.47999999999999 h7 l2.5 1.5 v8.5 h-9.5z" fill="#bdbdbd"/><rect x="1139.5" y="98.47999999999999" width="7.5" height="5.5" fill="#8a8a8a"/><path d="M1139.5 99.97999999999999 h7.5 M1139.5 101.97999999999999 h7.5" stroke="#c8c8c8" stroke-width="0.5"/>
<text x="1156" y="103.17999999999999" font-size="7.5" fill="#dcdcdc" stroke="#dcdcdc" stroke-width="0.22" textLength="36.5" lengthAdjust="spacingAndGlyphs" >Layer Order</text>
<rect x="1117.5" y="122.96000000000001" width="151" height="1" fill="#4a4a4a" />
<rect x="1120.5" y="111.30" width="8.5" height="9" fill="none" stroke="#5e5e5e" stroke-width="0.7"/>
<path d="M1138.5 110.8 h7 l2.5 1.5 v8.5 h-9.5z" fill="#bdbdbd"/><rect x="1139.5" y="113.8" width="7.5" height="5.5" fill="#8a8a8a"/><path d="M1139.5 115.3 h7.5 M1139.5 117.3 h7.5" stroke="#c8c8c8" stroke-width="0.5"/>
<text x="1156" y="118.5" font-size="7.5" fill="#dcdcdc" stroke="#dcdcdc" stroke-width="0.22" textLength="46.5" lengthAdjust="spacingAndGlyphs" >Free Transform</text>
<rect x="1117.5" y="138.28" width="151" height="1" fill="#4a4a4a" />
<rect x="1120.5" y="126.62" width="8.5" height="9" fill="none" stroke="#5e5e5e" stroke-width="0.7"/>
<g fill="#d8d8d8" stroke="#d8d8d8" stroke-width="1"><path d="M1138.7 131.12 H1147.7 M1143.2 126.62 V135.62" fill="none"/><path d="M1138.1000000000001 131.12 l2.2 -1.9 v3.8z M1148.3 131.12 l-2.2 -1.9 v3.8z M1143.2 126.02000000000001 l-1.9 2.2 h3.8z M1143.2 136.22 l-1.9 -2.2 h3.8z" stroke-width="0.4"/></g>
<text x="1156" y="133.82" font-size="7.5" fill="#dcdcdc" stroke="#dcdcdc" stroke-width="0.22" textLength="19.5" lengthAdjust="spacingAndGlyphs" >Move</text>
<rect x="1117.5" y="153.6" width="151" height="1" fill="#4a4a4a" />
<rect x="1120.5" y="141.94" width="8.5" height="9" fill="none" stroke="#5e5e5e" stroke-width="0.7"/>
<path d="M1138.5 141.44 h7 l2.5 1.5 v8.5 h-9.5z" fill="#bdbdbd"/><rect x="1139.5" y="144.44" width="7.5" height="5.5" fill="#8a8a8a"/><path d="M1139.5 145.94 h7.5 M1139.5 147.94 h7.5" stroke="#c8c8c8" stroke-width="0.5"/>
<text x="1156" y="149.14" font-size="7.5" fill="#dcdcdc" stroke="#dcdcdc" stroke-width="0.22" textLength="69.5" lengthAdjust="spacingAndGlyphs" >Master Opacity Change</text>
<rect x="1117.5" y="168.92" width="151" height="1" fill="#4a4a4a" />
<rect x="1120.5" y="157.26" width="8.5" height="9" fill="none" stroke="#5e5e5e" stroke-width="0.7"/>
<g fill="#d8d8d8" stroke="#d8d8d8" stroke-width="1"><path d="M1138.7 161.76 H1147.7 M1143.2 157.26 V166.26" fill="none"/><path d="M1138.1000000000001 161.76 l2.2 -1.9 v3.8z M1148.3 161.76 l-2.2 -1.9 v3.8z M1143.2 156.66 l-1.9 2.2 h3.8z M1143.2 166.85999999999999 l-1.9 -2.2 h3.8z" stroke-width="0.4"/></g>
<text x="1156" y="164.45999999999998" font-size="7.5" fill="#dcdcdc" stroke="#dcdcdc" stroke-width="0.22" textLength="19.5" lengthAdjust="spacingAndGlyphs" >Move</text>
<rect x="1117.5" y="184.24" width="151" height="1" fill="#4a4a4a" />
<rect x="1120.5" y="172.58" width="8.5" height="9" fill="none" stroke="#5e5e5e" stroke-width="0.7"/>
<path d="M1138.5 172.08 h7 l2.5 1.5 v8.5 h-9.5z" fill="#bdbdbd"/><rect x="1139.5" y="175.08" width="7.5" height="5.5" fill="#8a8a8a"/><path d="M1139.5 176.58 h7.5 M1139.5 178.58 h7.5" stroke="#c8c8c8" stroke-width="0.5"/>
<text x="1156" y="179.78" font-size="7.5" fill="#dcdcdc" stroke="#dcdcdc" stroke-width="0.22" textLength="46.5" lengthAdjust="spacingAndGlyphs" >Free Transform</text>
<rect x="1117.5" y="199.56" width="151" height="1" fill="#4a4a4a" />
<rect x="1120.5" y="187.90" width="8.5" height="9" fill="none" stroke="#5e5e5e" stroke-width="0.7"/>
<path d="M1138.5 187.4 h7 l2.5 1.5 v8.5 h-9.5z" fill="#bdbdbd"/><rect x="1139.5" y="190.4" width="7.5" height="5.5" fill="#8a8a8a"/><path d="M1139.5 191.9 h7.5 M1139.5 193.9 h7.5" stroke="#c8c8c8" stroke-width="0.5"/>
<text x="1156" y="195.1" font-size="7.5" fill="#dcdcdc" stroke="#dcdcdc" stroke-width="0.22" textLength="20.5" lengthAdjust="spacingAndGlyphs" >Nudge</text>
<rect x="1117.5" y="214.88" width="151" height="1" fill="#4a4a4a" />
<rect x="1120.5" y="203.22" width="8.5" height="9" fill="none" stroke="#5e5e5e" stroke-width="0.7"/>
<path d="M1138.5 202.72 h7 l2.5 1.5 v8.5 h-9.5z" fill="#bdbdbd"/><rect x="1139.5" y="205.72" width="7.5" height="5.5" fill="#8a8a8a"/><path d="M1139.5 207.22 h7.5 M1139.5 209.22 h7.5" stroke="#c8c8c8" stroke-width="0.5"/>
<text x="1156" y="210.42" font-size="7.5" fill="#dcdcdc" stroke="#dcdcdc" stroke-width="0.22" textLength="46.5" lengthAdjust="spacingAndGlyphs" >Free Transform</text>
<rect x="1117.5" y="230.2" width="151" height="1" fill="#4a4a4a" />
<rect x="1120.5" y="218.54" width="8.5" height="9" fill="none" stroke="#5e5e5e" stroke-width="0.7"/>
<rect x="1138.5" y="218.54" width="9.5" height="9" fill="none" stroke="#d8d8d8" stroke-width="1" stroke-dasharray="2 1.3"/>
<text x="1156" y="225.73999999999998" font-size="7.5" fill="#dcdcdc" stroke="#dcdcdc" stroke-width="0.22" textLength="61" lengthAdjust="spacingAndGlyphs" >Rectangular Marquee</text>
<rect x="1117.5" y="245.51999999999998" width="151" height="1" fill="#4a4a4a" />
<rect x="1120.5" y="233.86" width="8.5" height="9" fill="none" stroke="#5e5e5e" stroke-width="0.7"/>
<g fill="none" stroke="#d8d8d8" stroke-width="1.3"><path d="M1140.5 232.86 V241.36 H1149 M1138.3 235.36 H1146.5 V243.86"/></g>
<text x="1156" y="241.05999999999997" font-size="7.5" fill="#dcdcdc" stroke="#dcdcdc" stroke-width="0.22" textLength="16" lengthAdjust="spacingAndGlyphs" >Crop</text>
<rect x="1117.5" y="260.84000000000003" width="151" height="1" fill="#4a4a4a" />
<rect x="1120.5" y="249.18" width="8.5" height="9" fill="none" stroke="#5e5e5e" stroke-width="0.7"/>
<path d="M1138.5 248.68 h7 l2.5 1.5 v8.5 h-9.5z" fill="#bdbdbd"/><rect x="1139.5" y="251.68" width="7.5" height="5.5" fill="#8a8a8a"/><path d="M1139.5 253.18 h7.5 M1139.5 255.18 h7.5" stroke="#c8c8c8" stroke-width="0.5"/>
<text x="1156" y="256.38" font-size="7.5" fill="#dcdcdc" stroke="#dcdcdc" stroke-width="0.22" textLength="27" lengthAdjust="spacingAndGlyphs" >Deselect</text>
<rect x="1117.5" y="276.16" width="151" height="1" fill="#4a4a4a" />
<rect x="1120.5" y="264.50" width="8.5" height="9" fill="none" stroke="#5e5e5e" stroke-width="0.7"/>
<text x="1138.8" y="274.00" font-size="12" fill="#d8d8d8" stroke="#d8d8d8" stroke-width="0.45" font-family="Liberation Serif">T</text>
<text x="1156" y="271.70000000000005" font-size="7.5" fill="#dcdcdc" stroke="#dcdcdc" stroke-width="0.22" textLength="47" lengthAdjust="spacingAndGlyphs" >New Type Layer</text>
<rect x="1117.5" y="291.47999999999996" width="151" height="1" fill="#4a4a4a" />
<rect x="1120.5" y="279.82" width="8.5" height="9" fill="none" stroke="#5e5e5e" stroke-width="0.7"/>
<g fill="#d8d8d8" stroke="#d8d8d8" stroke-width="1"><path d="M1138.7 284.32 H1147.7 M1143.2 279.82 V288.82" fill="none"/><path d="M1138.1000000000001 284.32 l2.2 -1.9 v3.8z M1148.3 284.32 l-2.2 -1.9 v3.8z M1143.2 279.21999999999997 l-1.9 2.2 h3.8z M1143.2 289.42 l-1.9 -2.2 h3.8z" stroke-width="0.4"/></g>
<text x="1156" y="287.02" font-size="7.5" fill="#dcdcdc" stroke="#dcdcdc" stroke-width="0.22" textLength="19.5" lengthAdjust="spacingAndGlyphs" >Move</text>
<rect x="1117.5" y="306.8" width="151" height="1" fill="#4a4a4a" />
<rect x="1120.5" y="295.14" width="8.5" height="9" fill="none" stroke="#5e5e5e" stroke-width="0.7"/>
<text x="1138.8" y="304.64" font-size="12" fill="#d8d8d8" stroke="#d8d8d8" stroke-width="0.45" font-family="Liberation Serif">T</text>
<text x="1156" y="302.34000000000003" font-size="7.5" fill="#dcdcdc" stroke="#dcdcdc" stroke-width="0.22" textLength="46.5" lengthAdjust="spacingAndGlyphs" >Edit Type Layer</text>
<rect x="1117.5" y="322.12" width="151" height="1" fill="#4a4a4a" />
<rect x="1120.5" y="310.46" width="8.5" height="9" fill="none" stroke="#5e5e5e" stroke-width="0.7"/>
<g fill="#d8d8d8" stroke="#d8d8d8" stroke-width="1"><path d="M1138.7 314.96000000000004 H1147.7 M1143.2 310.46000000000004 V319.46000000000004" fill="none"/><path d="M1138.1000000000001 314.96000000000004 l2.2 -1.9 v3.8z M1148.3 314.96000000000004 l-2.2 -1.9 v3.8z M1143.2 309.86 l-1.9 2.2 h3.8z M1143.2 320.06000000000006 l-1.9 -2.2 h3.8z" stroke-width="0.4"/></g>
<text x="1156" y="317.66" font-size="7.5" fill="#dcdcdc" stroke="#dcdcdc" stroke-width="0.22" textLength="19.5" lengthAdjust="spacingAndGlyphs" >Move</text>
<rect x="1117.5" y="337.44" width="151" height="1" fill="#4a4a4a" />
<rect x="1120.5" y="325.78" width="8.5" height="9" fill="none" stroke="#5e5e5e" stroke-width="0.7"/>
<path d="M1138.5 325.28000000000003 h7 l2.5 1.5 v8.5 h-9.5z" fill="#bdbdbd"/><rect x="1139.5" y="328.28000000000003" width="7.5" height="5.5" fill="#8a8a8a"/><path d="M1139.5 329.78000000000003 h7.5 M1139.5 331.78000000000003 h7.5" stroke="#c8c8c8" stroke-width="0.5"/>
<text x="1156" y="332.98" font-size="7.5" fill="#dcdcdc" stroke="#dcdcdc" stroke-width="0.22" textLength="46.5" lengthAdjust="spacingAndGlyphs" >Free Transform</text>
<rect x="1117.5" y="337.94" width="151" height="15.32" fill="#6a6a6a" />
<rect x="1117.5" y="352.76" width="151" height="1" fill="#4a4a4a" />
<rect x="1120.5" y="341.10" width="8.5" height="9" fill="none" stroke="#5e5e5e" stroke-width="0.7"/>
<path d="M1138.5 340.6 h7 l2.5 1.5 v8.5 h-9.5z" fill="#bdbdbd"/><rect x="1139.5" y="343.6" width="7.5" height="5.5" fill="#8a8a8a"/><path d="M1139.5 345.1 h7.5 M1139.5 347.1 h7.5" stroke="#c8c8c8" stroke-width="0.5"/>
<text x="1156" y="348.3" font-size="7.5" fill="#dcdcdc" stroke="#dcdcdc" stroke-width="0.22" textLength="41.5" lengthAdjust="spacingAndGlyphs" >Nudge (Save)</text>
<rect x="1117.5" y="354" width="151" height="0.8" fill="#4a4a4a" />
<rect x="1117.5" y="354.5" width="162.5" height="16" fill="#535353" />
<g fill="#d8d8d8"><path d="M1215 357.5 h5 l2 2 v6 h-7z"/></g><path d="M1212 362 h5 M1214.5 359.5 v5" stroke="#ffffff" stroke-width="1.4"/>
<path d="M1234 359.3 h2.5 l1 -1.3 h3 l1 1.3 h2 v6.2 h-9.5z" fill="#d8d8d8"/><circle cx="1238.8" cy="362.2" r="2" fill="#535353"/><circle cx="1238.8" cy="362.2" r="1.1" fill="#d8d8d8"/>
<g fill="#d8d8d8"><rect x="1253" y="357.5" width="8" height="1.2"/><rect x="1255.5" y="356.5" width="3" height="1"/><path d="M1254 359.5 h6 l-0.5 6 h-5z"/></g>
<rect x="1117.5" y="370.5" width="162.5" height="2.5" fill="#3a3a3a" />
<rect x="1117.5" y="373" width="162.5" height="18" fill="#424242" />
<rect x="1159" y="373" width="31" height="18" fill="#535353" />
<rect x="1190" y="373" width="38" height="18" fill="#454545" />
<rect x="1228" y="373" width="0.8" height="18" fill="#3a3a3a" />
<text x="1123.5" y="384.8" font-size="7.5" fill="#b4b4b4" stroke="#b4b4b4" stroke-width="0.22" textLength="27.0" lengthAdjust="spacingAndGlyphs" >Channels</text>
<text x="1164.5" y="384.8" font-size="7.5" fill="#ececec" stroke="#ececec" stroke-width="0.22" font-weight="bold" textLength="19.0" lengthAdjust="spacingAndGlyphs" >Styles</text>
<text x="1195.5" y="384.8" font-size="7.5" fill="#b4b4b4" stroke="#b4b4b4" stroke-width="0.22" textLength="26.5" lengthAdjust="spacingAndGlyphs" >Libraries</text>
<rect x="1268.5" y="379.5" width="7" height="5" fill="#9a9a9a" />
<path d="M1268.5 381 h7 M1268.5 382.8 h7" stroke="#6a6a6a" stroke-width="0.5"/>
<rect x="1117.5" y="391" width="162.5" height="302" fill="#535353" />
<rect x="1266.5" y="391" width="10" height="285.5" fill="#4e4e4e" />
<rect x="1117.8" y="394.8" width="20.4" height="20.4" fill="#4c4c4c" />
<rect x="1122.5" y="399.5" width="11" height="11" fill="#1e1e1e" />
<rect x="1123.5" y="400.5" width="9" height="9" fill="#ffffff" />
<path d="M1121.0 398.0 L1135.0 412.0" stroke="#9b2020" stroke-width="1.4"/>
<rect x="1139.15" y="394.8" width="20.4" height="20.4" fill="#4c4c4c" />
<rect x="1144.15" y="399.8" width="10.4" height="10.4" fill="#F08A22" />
<rect x="1160.5" y="394.8" width="20.4" height="20.4" fill="#4c4c4c" />
<rect x="1165.5" y="399.8" width="10.4" height="10.4" fill="#F5D52A" />
<rect x="1181.85" y="394.8" width="20.4" height="20.4" fill="#4c4c4c" />
<rect x="1186.85" y="399.8" width="10.4" height="10.4" fill="#EBCBAA" />
<rect x="1203.2" y="394.8" width="20.4" height="20.4" fill="#4c4c4c" />
<rect x="1208.2" y="399.8" width="10.4" height="10.4" fill="#F6B262" />
<rect x="1224.55" y="394.8" width="20.4" height="20.4" fill="#4c4c4c" />
<rect x="1229.55" y="399.8" width="10.4" height="10.4" fill="#F57B1E" />
<rect x="1245.9" y="394.8" width="20.4" height="20.4" fill="#4c4c4c" />
<rect x="1250.9" y="399.8" width="10.4" height="10.4" fill="#F7D870" />
<rect x="1117.8" y="416.2" width="20.4" height="20.4" fill="#4c4c4c" />
<rect x="1122.8" y="421.2" width="10.4" height="10.4" fill="#F7D24A" />
<rect x="1139.15" y="416.2" width="20.4" height="20.4" fill="#4c4c4c" />
<rect x="1144.15" y="421.2" width="10.4" height="10.4" fill="#F2744E" />
<rect x="1160.5" y="416.2" width="20.4" height="20.4" fill="#4c4c4c" />
<rect x="1165.5" y="421.2" width="10.4" height="10.4" fill="#F5B29A" />
<rect x="1181.85" y="416.2" width="20.4" height="20.4" fill="#4c4c4c" />
<rect x="1186.85" y="421.2" width="10.4" height="10.4" fill="#F68D24" />
<rect x="1203.2" y="416.2" width="20.4" height="20.4" fill="#4c4c4c" />
<rect x="1208.2" y="421.2" width="10.4" height="10.4" fill="#6E6E6E" />
<rect x="1224.55" y="416.2" width="20.4" height="20.4" fill="#4c4c4c" />
<rect x="1229.55" y="421.2" width="10.4" height="10.4" fill="#2E2E2E" />
<rect x="1245.9" y="416.2" width="20.4" height="20.4" fill="#4c4c4c" />
<rect x="1250.9" y="421.2" width="10.4" height="10.4" fill="#D2A890" />
<rect x="1117.8" y="437.6" width="20.4" height="20.4" fill="#4c4c4c" />
<rect x="1122.8" y="442.6" width="10.4" height="10.4" fill="#3B2A22" />
<rect x="1139.15" y="437.6" width="20.4" height="20.4" fill="#4c4c4c" />
<rect x="1144.15" y="442.6" width="10.4" height="10.4" fill="#3D3D3D" />
<rect x="1160.5" y="437.6" width="20.4" height="20.4" fill="#4c4c4c" />
<rect x="1165.5" y="442.6" width="10.4" height="10.4" fill="#3A2519" />
<rect x="1181.85" y="437.6" width="20.4" height="20.4" fill="#4c4c4c" />
<rect x="1186.85" y="442.6" width="10.4" height="10.4" fill="#2FA2AA" />
<rect x="1203.2" y="437.6" width="20.4" height="20.4" fill="#4c4c4c" />
<rect x="1208.2" y="442.6" width="10.4" height="10.4" fill="#2BA0D0" />
<rect x="1224.55" y="437.6" width="20.4" height="20.4" fill="#4c4c4c" />
<rect x="1229.55" y="442.6" width="10.4" height="10.4" fill="#54B9DA" />
<rect x="1245.9" y="437.6" width="20.4" height="20.4" fill="#4c4c4c" />
<rect x="1250.9" y="442.6" width="10.4" height="10.4" fill="#3DBDB2" />
<rect x="1117.8" y="459.0" width="20.4" height="20.4" fill="#4c4c4c" />
<rect x="1122.8" y="464.0" width="10.4" height="10.4" fill="#3EB4B9" />
<rect x="1139.15" y="459.0" width="20.4" height="20.4" fill="#4c4c4c" />
<rect x="1144.15" y="464.0" width="10.4" height="10.4" fill="#E9B950" />
<rect x="1160.5" y="459.0" width="20.4" height="20.4" fill="#4c4c4c" />
<rect x="1165.5" y="464.0" width="10.4" height="10.4" fill="#D4A450" />
<rect x="1181.85" y="459.0" width="20.4" height="20.4" fill="#4c4c4c" />
<rect x="1186.85" y="464.0" width="10.4" height="10.4" fill="#D9B77F" />
<rect x="1203.2" y="459.0" width="20.4" height="20.4" fill="#4c4c4c" />
<rect x="1208.2" y="464.0" width="10.4" height="10.4" fill="#C9871C" />
<rect x="1224.55" y="459.0" width="20.4" height="20.4" fill="#4c4c4c" />
<rect x="1229.55" y="464.0" width="10.4" height="10.4" fill="#F3E3A4" />
<rect x="1245.9" y="459.0" width="20.4" height="20.4" fill="#4c4c4c" />
<rect x="1250.9" y="464.0" width="10.4" height="10.4" fill="#202020" />
<rect x="1117.8" y="480.4" width="20.4" height="20.4" fill="#4c4c4c" />
<rect x="1122.8" y="485.4" width="10.4" height="10.4" fill="#2B2B2B" />
<rect x="1139.15" y="480.4" width="20.4" height="20.4" fill="#4c4c4c" />
<rect x="1144.15" y="485.4" width="10.4" height="10.4" fill="#333333" />
<rect x="1160.5" y="480.4" width="20.4" height="20.4" fill="#4c4c4c" />
<rect x="1165.5" y="485.4" width="10.4" height="10.4" fill="#E44C4C" />
<rect x="1181.85" y="480.4" width="20.4" height="20.4" fill="#4c4c4c" />
<rect x="1186.85" y="485.4" width="10.4" height="10.4" fill="#E96B7B" />
<rect x="1203.2" y="480.4" width="20.4" height="20.4" fill="#4c4c4c" />
<rect x="1208.2" y="485.4" width="10.4" height="10.4" fill="#F57B1C" />
<rect x="1224.55" y="480.4" width="20.4" height="20.4" fill="#4c4c4c" />
<rect x="1229.55" y="485.4" width="10.4" height="10.4" fill="#E3228B" />
<rect x="1245.9" y="480.4" width="20.4" height="20.4" fill="#4c4c4c" />
<rect x="1250.9" y="485.4" width="10.4" height="10.4" fill="#E43A9B" />
<rect x="1117.8" y="501.8" width="20.4" height="20.4" fill="#4c4c4c" />
<rect x="1122.8" y="506.8" width="10.4" height="10.4" fill="#E24A9B" />
<rect x="1139.15" y="501.8" width="20.4" height="20.4" fill="#4c4c4c" />
<rect x="1144.15" y="506.8" width="10.4" height="10.4" fill="#EE4B7B" />
<rect x="1160.5" y="501.8" width="20.4" height="20.4" fill="#4c4c4c" />
<rect x="1165.5" y="506.8" width="10.4" height="10.4" fill="#F0557F" />
<rect x="1181.85" y="501.8" width="20.4" height="20.4" fill="#4c4c4c" />
<rect x="1186.85" y="506.8" width="10.4" height="10.4" fill="#E04B5D" />
<rect x="1203.2" y="501.8" width="20.4" height="20.4" fill="#4c4c4c" />
<rect x="1208.2" y="506.8" width="10.4" height="10.4" fill="#D42B3B" />
<rect x="1224.55" y="501.8" width="20.4" height="20.4" fill="#4c4c4c" />
<rect x="1229.55" y="506.8" width="10.4" height="10.4" fill="#9B2B6B" />
<rect x="1245.9" y="501.8" width="20.4" height="20.4" fill="#4c4c4c" />
<rect x="1250.9" y="506.8" width="10.4" height="10.4" fill="#50B06B" />
<rect x="1117.8" y="523.2" width="20.4" height="20.4" fill="#4c4c4c" />
<rect x="1122.8" y="528.2" width="10.4" height="10.4" fill="#E6E8A2" />
<rect x="1139.15" y="523.2" width="20.4" height="20.4" fill="#4c4c4c" />
<rect x="1144.15" y="528.2" width="10.4" height="10.4" fill="#63C1A9" />
<rect x="1160.5" y="523.2" width="20.4" height="20.4" fill="#4c4c4c" />
<rect x="1165.5" y="528.2" width="10.4" height="10.4" fill="#BDE5C9" />
<rect x="1181.85" y="523.2" width="20.4" height="20.4" fill="#4c4c4c" />
<rect x="1186.85" y="528.2" width="10.4" height="10.4" fill="#AADB84" />
<rect x="1203.2" y="523.2" width="20.4" height="20.4" fill="#4c4c4c" />
<rect x="1208.2" y="528.2" width="10.4" height="10.4" fill="#54C99B" />
<rect x="1224.55" y="523.2" width="20.4" height="20.4" fill="#4c4c4c" />
<rect x="1229.55" y="528.2" width="10.4" height="10.4" fill="#E9ED9C" />
<rect x="1245.9" y="523.2" width="20.4" height="20.4" fill="#4c4c4c" />
<rect x="1250.9" y="528.2" width="10.4" height="10.4" fill="#A0DEB5" />
<rect x="1117.8" y="544.6" width="20.4" height="20.4" fill="#4c4c4c" />
<rect x="1122.8" y="549.6" width="10.4" height="10.4" fill="#4EC5A1" />
<rect x="1139.15" y="544.6" width="20.4" height="20.4" fill="#4c4c4c" />
<rect x="1144.15" y="549.6" width="10.4" height="10.4" fill="#A9D96C" />
<rect x="1160.5" y="544.6" width="20.4" height="20.4" fill="#4c4c4c" />
<rect x="1165.5" y="549.6" width="10.4" height="10.4" fill="#20899A" />
<rect x="1181.85" y="544.6" width="20.4" height="20.4" fill="#4c4c4c" />
<rect x="1186.85" y="549.6" width="10.4" height="10.4" fill="#EE6F6F" />
<rect x="1203.2" y="544.6" width="20.4" height="20.4" fill="#4c4c4c" />
<rect x="1208.2" y="549.6" width="10.4" height="10.4" fill="#D83B57" />
<rect x="1224.55" y="544.6" width="20.4" height="20.4" fill="#4c4c4c" />
<rect x="1229.55" y="549.6" width="10.4" height="10.4" fill="#E6617B" />
<rect x="1245.9" y="544.6" width="20.4" height="20.4" fill="#4c4c4c" />
<rect x="1250.9" y="549.6" width="10.4" height="10.4" fill="#E03B2B" />
<rect x="1117.8" y="566.0" width="20.4" height="20.4" fill="#4c4c4c" />
<rect x="1122.8" y="571.0" width="10.4" height="10.4" fill="#A9131B" />
<rect x="1139.15" y="566.0" width="20.4" height="20.4" fill="#4c4c4c" />
<rect x="1144.15" y="571.0" width="10.4" height="10.4" fill="#E0473B" />
<rect x="1160.5" y="566.0" width="20.4" height="20.4" fill="#4c4c4c" />
<rect x="1165.5" y="571.0" width="10.4" height="10.4" fill="#E83F3B" />
<rect x="1117.5" y="676.5" width="162.5" height="1" fill="#484848" />
<circle cx="1219" cy="684.3" r="3.7" fill="none" stroke="#d8d8d8" stroke-width="1.1"/><path d="M1216.5 681.8 l5 5" stroke="#d8d8d8" stroke-width="1.1"/>
<path d="M1234.5 680.8 h6.5 v7 h-6.5z" fill="none" stroke="#d8d8d8" stroke-width="1"/><path d="M1234.5 683.8 h3 v4" fill="none" stroke="#d8d8d8" stroke-width="1"/>
<g fill="#8a8a8a"><rect x="1253" y="680" width="8" height="1.2"/><rect x="1255.5" y="679" width="3" height="1"/><path d="M1254 682 h6 l-0.5 6 h-5z"/></g>
<defs>
<linearGradient id="tbg" x1="0" y1="0" x2="1" y2="0">
<stop offset="0" stop-color="#8793a3"/><stop offset="0.12" stop-color="#a7b1bd"/><stop offset="0.25" stop-color="#8e9aab"/>
<stop offset="0.4" stop-color="#a3adb8"/><stop offset="0.55" stop-color="#8f9aa8"/><stop offset="0.7" stop-color="#a9b2bb"/>
<stop offset="0.85" stop-color="#7f8a99"/><stop offset="1" stop-color="#6a7584"/></linearGradient>
<pattern id="streak" patternUnits="userSpaceOnUse" width="90" height="27" patternTransform="skewX(-55)">
<rect x="0" y="0" width="90" height="27" fill="none"/>
<rect x="10" y="0" width="14" height="27" fill="#3f5070" opacity="0.35"/>
<rect x="48" y="0" width="22" height="27" fill="#d8dde2" opacity="0.25"/>
</pattern>
<linearGradient id="gl" x1="0" y1="0" x2="0" y2="1"><stop offset="0" stop-color="#ffffff" stop-opacity="0.12"/><stop offset="0.5" stop-color="#ffffff" stop-opacity="0.05"/><stop offset="1" stop-color="#000000" stop-opacity="0.08"/></linearGradient>
<radialGradient id="orb" cx="0.5" cy="0.4" r="0.6"><stop offset="0" stop-color="#8fd0f5"/><stop offset="0.6" stop-color="#2a86c9"/><stop offset="1" stop-color="#0f3f77"/></radialGradient>
</defs>
<defs><linearGradient id="tbase" x1="0" x2="1"><stop offset="0" stop-color="#97a2b0"/><stop offset="0.35" stop-color="#909baa"/><stop offset="0.5" stop-color="#858f9c"/><stop offset="1" stop-color="#7e8896"/></linearGradient></defs>
<rect x="0" y="693.5" width="1280" height="26.5" fill="url(#tbase)" />
<defs><filter id="bl" x="-20%" y="-50%" width="140%" height="200%"><feGaussianBlur stdDeviation="4 2.5"/></filter><clipPath id="tbc"><rect x="0" y="693.5" width="1280" height="26.5"/></clipPath></defs>
<g clip-path="url(#tbc)"><g filter="url(#bl)"><path d="M60 722 L100 690 L125 690 L85 722 Z" fill="#3a4762" opacity="0.35"/><path d="M165 722 L205 690 L235 690 L195 722 Z" fill="#3a4762" opacity="0.35"/><path d="M330 722 L370 690 L395 690 L355 722 Z" fill="#3a4762" opacity="0.3"/><path d="M482 722 L522 690 L553 690 L513 722 Z" fill="#3a4762" opacity="0.9"/><path d="M557 722 L597 690 L637 690 L597 722 Z" fill="#3a4762" opacity="0.8"/><path d="M637 722 L677 690 L710 690 L670 722 Z" fill="#3a4762" opacity="0.85"/><path d="M723 722 L763 690 L808 690 L768 722 Z" fill="#3a4762" opacity="0.8"/><path d="M898 722 L938 690 L978 690 L938 722 Z" fill="#3a4762" opacity="0.85"/><path d="M930 722 L970 690 L1010 690 L970 722 Z" fill="#3a4762" opacity="0.7"/><path d="M1035 722 L1075 690 L1117 690 L1077 722 Z" fill="#3a4762" opacity="0.8"/><path d="M1150 722 L1190 690 L1240 690 L1200 722 Z" fill="#3a4762" opacity="0.6"/><path d="M100 722 L140 690 L180 690 L140 722 Z" fill="#b4babd" opacity="0.5"/><path d="M230 722 L270 690 L330 690 L290 722 Z" fill="#b4babd" opacity="0.5"/><path d="M390 722 L430 690 L490 690 L450 722 Z" fill="#b4babd" opacity="0.4"/><path d="M507 722 L547 690 L592 690 L552 722 Z" fill="#b4babd" opacity="0.7"/><path d="M667 722 L707 690 L757 690 L717 722 Z" fill="#b4babd" opacity="0.6"/><path d="M768 722 L808 690 L880 690 L840 722 Z" fill="#b4babd" opacity="0.6"/><path d="M990 722 L1030 690 L1060 690 L1020 722 Z" fill="#b4babd" opacity="0.5"/><path d="M1200 722 L1240 690 L1280 690 L1240 722 Z" fill="#b4babd" opacity="0.5"/><ellipse cx="1052" cy="710" rx="16" ry="6" fill="#c3c8bd" opacity="0.8"/></g></g>
<rect x="0" y="693.5" width="1280" height="26.5" fill="url(#gl)" />
<rect x="0" y="693.8" width="1280" height="1" fill="#a3adb8" />
<circle cx="18.5" cy="706.8" r="12" fill="url(#orb)" stroke="#3a6ea0" stroke-width="0.8"/>
<g><path d="M12.5 701 q3 -1.5 5.5 0 v5 q-2.5 -1.5 -5.5 0z" fill="#f26b2a"/><path d="M19 701.3 q3 1.3 6 -0.5 v5 q-3 1.8 -6 0.5z" fill="#7cc242"/><path d="M12.5 707 q3 -1.5 5.5 0 v5 q-2.5 -1.5 -5.5 0z" fill="#2f9be8"/><path d="M19 707.3 q3 1.3 6 -0.5 v5 q-3 1.8 -6 0.5z" fill="#fcc31a"/></g>
<ellipse cx="18.5" cy="700" rx="8" ry="4" fill="#ffffff" opacity="0.25"/>
<rect x="54" y="697" width="16" height="19" rx="1" fill="#2b7cd3"/><rect x="54" y="703" width="16" height="6.5" fill="#185abd"/><rect x="54" y="709.5" width="16" height="6.5" fill="#103f91"/><rect x="48.5" y="700.5" width="10.5" height="11" rx="1" fill="#185abd"/>
<text x="49.4" y="709.8" font-size="8.5" font-weight="bold" fill="#ffffff" font-family="Liberation Sans">W</text>
<rect x="96" y="697" width="16" height="19" rx="1" fill="#21a366"/><rect x="96" y="703" width="16" height="6.5" fill="#107c41"/><rect x="96" y="709.5" width="16" height="6.5" fill="#185c37"/><rect x="90" y="700.5" width="10.5" height="11" rx="1" fill="#107c41"/>
<text x="92" y="709.8" font-size="8.5" font-weight="bold" fill="#ffffff" font-family="Liberation Sans">X</text>
<rect x="132.3" y="697" width="20" height="19" rx="1" fill="#f7932b"/><rect x="134" y="698.7" width="16.6" height="15.6" fill="#330000"/>
<text x="136" y="711.2" font-size="10" fill="#ff9a00" font-family="Liberation Sans">Ai</text>
<circle cx="182.5" cy="706.5" r="9.8" fill="#2d7fd0" stroke="#a8d0f0" stroke-width="1.2"/><circle cx="182.5" cy="706.5" r="5" fill="#f8b830"/><circle cx="182.5" cy="706.5" r="2.2" fill="#fde7a0"/>
<rect x="216.5" y="697" width="14.5" height="19" rx="1" fill="#dce8f0" stroke="#8aa0b5" stroke-width="0.6"/><rect x="218.5" y="699" width="10.5" height="4" fill="#7aa6c8"/>
<rect x="218.5" y="705.0" width="2.7" height="2.5" fill="#9ab6cf"/>
<rect x="222.2" y="705.0" width="2.7" height="2.5" fill="#9ab6cf"/>
<rect x="225.9" y="705.0" width="2.7" height="2.5" fill="#9ab6cf"/>
<rect x="218.5" y="708.5" width="2.7" height="2.5" fill="#9ab6cf"/>
<rect x="222.2" y="708.5" width="2.7" height="2.5" fill="#9ab6cf"/>
<rect x="225.9" y="708.5" width="2.7" height="2.5" fill="#9ab6cf"/>
<rect x="218.5" y="712.0" width="2.7" height="2.5" fill="#9ab6cf"/>
<rect x="222.2" y="712.0" width="2.7" height="2.5" fill="#9ab6cf"/>
<rect x="225.9" y="712.0" width="2.7" height="2.5" fill="#9ab6cf"/>
<circle cx="266" cy="706.5" r="10" fill="#db4437"/>
<path d="M266 706.5 L257.34 711.5 A10 10 0 0 0 267.732 716.4 Z" fill="#0f9d58"/>
<path d="M266 706.5 L276 706.4 A10 10 0 0 1 267.7 716.35 Z" fill="#ffcd40"/>
<circle cx="266" cy="706.5" r="4.6000000000000005" fill="#ffffff"/><circle cx="266" cy="706.5" r="3.5999999999999996" fill="#4285f4"/>
<rect x="287.5" y="695" width="38.5" height="24" rx="2" fill="#dde4ea" opacity="0.9" stroke="#f4f7fa" stroke-width="0.8"/>
<rect x="297.5" y="697" width="19" height="19" rx="1" fill="#31a8ff"/><rect x="299" y="698.5" width="16" height="16" fill="#001e36"/>
<text x="300.5" y="710.5" font-size="9.5" fill="#31a8ff" font-family="Liberation Sans" font-weight="bold">Ps</text>
<rect x="328.8" y="695" width="33.7" height="24" rx="2" fill="#b9c2cc" opacity="0.7" stroke="#dfe5ea" stroke-width="0.6"/>
<path d="M336 713 L338 702 C340 697 348 696 352 699 L345 714 Z" fill="#8cc63f"/><path d="M339 711 L341 703 L348 701" fill="none" stroke="#4a7a20" stroke-width="1"/>
<rect x="367" y="695" width="1.2" height="24" fill="#7b8794" />
<rect x="371" y="695" width="37.8" height="24" rx="2" fill="#b9c2cc" opacity="0.7" stroke="#dfe5ea" stroke-width="0.6"/>
<circle cx="390" cy="706.5" r="10" fill="#db4437"/>
<path d="M390 706.5 L381.34 711.5 A10 10 0 0 0 391.732 716.4 Z" fill="#0f9d58"/>
<path d="M390 706.5 L400 706.4 A10 10 0 0 1 391.7 716.35 Z" fill="#ffcd40"/>
<circle cx="390" cy="706.5" r="4.6000000000000005" fill="#ffffff"/><circle cx="390" cy="706.5" r="3.5999999999999996" fill="#4285f4"/>
<rect x="412" y="695" width="38" height="24" rx="2" fill="#b9c2cc" opacity="0.7" stroke="#dfe5ea" stroke-width="0.6"/>
<circle cx="434" cy="706.5" r="9.5" fill="#ed6c47"/><path d="M434 697 A9.5 9.5 0 0 1 443.5 706.5 H434Z" fill="#ff8f6b"/><rect x="421" y="701" width="11" height="11" rx="1" fill="#c43e1c"/>
<text x="423.3" y="710.3" font-size="8.5" font-weight="bold" fill="#ffffff" font-family="Liberation Sans">P</text>
<rect x="1135.5" y="704.5" width="10" height="5.5" rx="0.8" fill="#d8dde3"/>
<path d="M1155.5 709.5 l2.7 -3 l2.7 3z" fill="#ffffff"/>
<g fill="none" stroke="#f0f0f0" stroke-width="1.1"><rect x="1172" y="704" width="6.5" height="6"/><path d="M1171 703 v9"/></g><rect x="1170" y="702" width="2" height="2" fill="#f0f0f0"/>
<circle cx="1191.5" cy="708.5" r="3.8" fill="#d42020"/><path d="M1190 707 l3 3 M1193 707 l-3 3" stroke="#fff" stroke-width="0.8"/><path d="M1187 704 h2 M1194.5 704 h2" stroke="#c0c8d0" stroke-width="1.5"/>
<path d="M1202.5 705.5 h2 l3 -2.5 v11 l-3 -2.5 h-2z" fill="#f2f2f2"/><path d="M1209.5 705.5 q1.5 2.5 0 5" fill="none" stroke="#f2f2f2" stroke-width="0.8"/>
<text x="1243" y="704.5" font-size="8.5" fill="#ffffff" stroke="#ffffff" stroke-width="0.22" text-anchor="middle" textLength="18" lengthAdjust="spacingAndGlyphs" >12:49</text>
<text x="1243" y="715.5" font-size="8.5" fill="#ffffff" stroke="#ffffff" stroke-width="0.22" text-anchor="middle" textLength="38" lengthAdjust="spacingAndGlyphs" >18/07/2019</text>
<rect x="1271" y="694.5" width="9" height="25.5" fill="#c5ccd4" opacity="0.6" stroke="#e8ecef" stroke-width="0.6"/>
</svg>
</body></html>
